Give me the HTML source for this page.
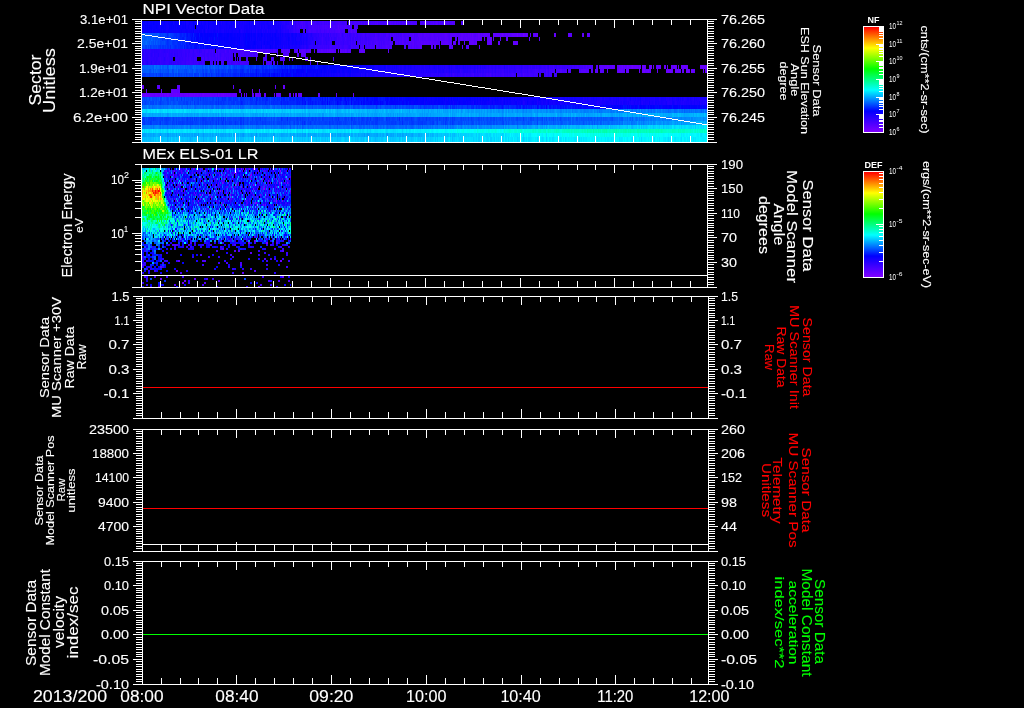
<!DOCTYPE html>
<html><head><meta charset="utf-8"><style>
html,body{margin:0;padding:0;background:#000;width:1024px;height:708px;overflow:hidden}
#c{position:absolute;left:0;top:0}
svg{position:absolute;left:0;top:0}
text{font-family:"Liberation Sans",sans-serif;stroke-width:0.12px}
</style></head><body>
<svg id="fb" width="1024" height="708" style="position:absolute;left:0;top:0"><defs><linearGradient id="fr0" gradientUnits="userSpaceOnUse" x1="142" y1="0" x2="707" y2="0"><stop offset="0.0000" stop-color="#0600ff"/><stop offset="0.2442" stop-color="#1900ff"/><stop offset="0.2814" stop-color="#4000ff"/><stop offset="0.5274" stop-color="#4800f2"/><stop offset="0.5646" stop-color="#0b0026"/><stop offset="0.5982" stop-color="#070019"/><stop offset="0.6336" stop-color="#000000"/></linearGradient><linearGradient id="fr1" gradientUnits="userSpaceOnUse" x1="142" y1="0" x2="707" y2="0"><stop offset="0.0000" stop-color="#0600ff"/><stop offset="0.2442" stop-color="#1900f9"/><stop offset="0.2814" stop-color="#4000ff"/><stop offset="0.3681" stop-color="#4800f2"/><stop offset="0.3858" stop-color="#020007"/><stop offset="0.5451" stop-color="#020007"/><stop offset="0.5805" stop-color="#000000"/></linearGradient><linearGradient id="fr2" gradientUnits="userSpaceOnUse" x1="142" y1="0" x2="707" y2="0"><stop offset="0.0000" stop-color="#0600ff"/><stop offset="0.2442" stop-color="#1800f2"/><stop offset="0.2814" stop-color="#3900e5"/><stop offset="0.3681" stop-color="#3d00cc"/><stop offset="0.3947" stop-color="#010005"/><stop offset="0.5451" stop-color="#000000"/></linearGradient><linearGradient id="fr3" gradientUnits="userSpaceOnUse" x1="142" y1="0" x2="707" y2="0"><stop offset="0.0000" stop-color="#0066ff"/><stop offset="0.1027" stop-color="#0000ff"/><stop offset="0.2796" stop-color="#1300ff"/><stop offset="0.3150" stop-color="#3300ff"/><stop offset="0.5628" stop-color="#5500f2"/><stop offset="0.6832" stop-color="#5600e5"/><stop offset="0.6938" stop-color="#1c004c"/><stop offset="0.7929" stop-color="#130032"/><stop offset="0.8106" stop-color="#000000"/></linearGradient><linearGradient id="fr4" gradientUnits="userSpaceOnUse" x1="142" y1="0" x2="707" y2="0"><stop offset="0.0000" stop-color="#0066ff"/><stop offset="0.1027" stop-color="#0000ff"/><stop offset="0.2796" stop-color="#1300ff"/><stop offset="0.3150" stop-color="#3300ff"/><stop offset="0.5628" stop-color="#4c00d8"/><stop offset="0.6248" stop-color="#390099"/><stop offset="0.6425" stop-color="#11002d"/><stop offset="0.7398" stop-color="#090019"/><stop offset="0.7752" stop-color="#000000"/></linearGradient><linearGradient id="fr5" gradientUnits="userSpaceOnUse" x1="142" y1="0" x2="707" y2="0"><stop offset="0.0000" stop-color="#0066ff"/><stop offset="0.1027" stop-color="#0000ff"/><stop offset="0.2796" stop-color="#1300ff"/><stop offset="0.3150" stop-color="#3000f2"/><stop offset="0.5274" stop-color="#4c00d8"/><stop offset="0.6159" stop-color="#30007f"/><stop offset="0.6336" stop-color="#070014"/><stop offset="0.7221" stop-color="#04000c"/><stop offset="0.7398" stop-color="#000000"/></linearGradient><linearGradient id="fr6" gradientUnits="userSpaceOnUse" x1="142" y1="0" x2="707" y2="0"><stop offset="0.0000" stop-color="#004cff"/><stop offset="0.1027" stop-color="#000cff"/><stop offset="0.2796" stop-color="#1900ff"/><stop offset="0.3150" stop-color="#3600f2"/><stop offset="0.4566" stop-color="#3d00cc"/><stop offset="0.5628" stop-color="#1a004c"/><stop offset="0.6159" stop-color="#04000c"/><stop offset="0.6336" stop-color="#000000"/></linearGradient><linearGradient id="fr7" gradientUnits="userSpaceOnUse" x1="142" y1="0" x2="707" y2="0"><stop offset="0.0000" stop-color="#2900ff"/><stop offset="0.1027" stop-color="#3900ff"/><stop offset="0.1912" stop-color="#4400f7"/><stop offset="0.2796" stop-color="#4600d8"/><stop offset="0.3504" stop-color="#4700cc"/><stop offset="0.3681" stop-color="#080019"/><stop offset="0.5628" stop-color="#04000c"/><stop offset="0.5805" stop-color="#000000"/></linearGradient><linearGradient id="fr8" gradientUnits="userSpaceOnUse" x1="142" y1="0" x2="707" y2="0"><stop offset="0.0000" stop-color="#2900ff"/><stop offset="0.1027" stop-color="#3900fc"/><stop offset="0.1912" stop-color="#3800cc"/><stop offset="0.2796" stop-color="#18004c"/><stop offset="0.2973" stop-color="#060014"/><stop offset="0.3504" stop-color="#010005"/><stop offset="0.3681" stop-color="#000000"/></linearGradient><linearGradient id="fr9" gradientUnits="userSpaceOnUse" x1="142" y1="0" x2="707" y2="0"><stop offset="0.0000" stop-color="#2900ff"/><stop offset="0.0850" stop-color="#3800f9"/><stop offset="0.1912" stop-color="#23007f"/><stop offset="0.2796" stop-color="#080019"/><stop offset="0.3504" stop-color="#010005"/><stop offset="0.3681" stop-color="#000000"/></linearGradient><linearGradient id="fr10" gradientUnits="userSpaceOnUse" x1="142" y1="0" x2="707" y2="0"><stop offset="0.0000" stop-color="#0066ff"/><stop offset="0.1027" stop-color="#0059ff"/><stop offset="0.2796" stop-color="#0019ff"/><stop offset="0.4566" stop-color="#1900ff"/><stop offset="0.5628" stop-color="#2000ff"/><stop offset="0.7752" stop-color="#3e00f7"/><stop offset="0.8106" stop-color="#4700cc"/><stop offset="0.8814" stop-color="#4c00bf"/><stop offset="0.9982" stop-color="#5100cc"/></linearGradient><linearGradient id="fr11" gradientUnits="userSpaceOnUse" x1="142" y1="0" x2="707" y2="0"><stop offset="0.0000" stop-color="#0059ff"/><stop offset="0.1027" stop-color="#004cff"/><stop offset="0.2796" stop-color="#0000ff"/><stop offset="0.4566" stop-color="#1900ff"/><stop offset="0.5628" stop-color="#2600ff"/><stop offset="0.7221" stop-color="#3c00f2"/><stop offset="0.7398" stop-color="#2e0099"/><stop offset="0.8478" stop-color="#30007f"/><stop offset="0.8814" stop-color="#280066"/><stop offset="0.9982" stop-color="#33007f"/></linearGradient><linearGradient id="fr12" gradientUnits="userSpaceOnUse" x1="142" y1="0" x2="707" y2="0"><stop offset="0.0000" stop-color="#003fff"/><stop offset="0.1027" stop-color="#003fff"/><stop offset="0.2796" stop-color="#0600ff"/><stop offset="0.4566" stop-color="#2000ff"/><stop offset="0.5628" stop-color="#3200f9"/><stop offset="0.7044" stop-color="#3900e5"/><stop offset="0.7363" stop-color="#2c00b2"/><stop offset="0.7434" stop-color="#000000"/><stop offset="0.9982" stop-color="#000000"/></linearGradient><linearGradient id="fr13" gradientUnits="userSpaceOnUse" x1="142" y1="0" x2="707" y2="0"><stop offset="0.0000" stop-color="#000000"/><stop offset="0.9982" stop-color="#000000"/></linearGradient><linearGradient id="fr14" gradientUnits="userSpaceOnUse" x1="142" y1="0" x2="707" y2="0"><stop offset="0.0000" stop-color="#060011"/><stop offset="0.0142" stop-color="#130032"/><stop offset="0.0584" stop-color="#130032"/><stop offset="0.0761" stop-color="#020007"/><stop offset="0.1469" stop-color="#020007"/><stop offset="0.1664" stop-color="#130032"/><stop offset="0.1912" stop-color="#0e0026"/><stop offset="0.2088" stop-color="#020007"/><stop offset="0.2796" stop-color="#010005"/><stop offset="0.3150" stop-color="#000000"/><stop offset="0.9982" stop-color="#000000"/></linearGradient><linearGradient id="fr15" gradientUnits="userSpaceOnUse" x1="142" y1="0" x2="707" y2="0"><stop offset="0.0000" stop-color="#6300f7"/><stop offset="0.1469" stop-color="#6100f2"/><stop offset="0.1593" stop-color="#3e00a5"/><stop offset="0.2796" stop-color="#34008c"/><stop offset="0.2973" stop-color="#0e0026"/><stop offset="0.4566" stop-color="#060011"/><stop offset="0.4743" stop-color="#000000"/><stop offset="0.9982" stop-color="#000000"/></linearGradient><linearGradient id="fr16" gradientUnits="userSpaceOnUse" x1="142" y1="0" x2="707" y2="0"><stop offset="0.0000" stop-color="#004cff"/><stop offset="0.1027" stop-color="#003fff"/><stop offset="0.4566" stop-color="#0000ff"/><stop offset="0.8106" stop-color="#1600ff"/><stop offset="0.9982" stop-color="#1900ff"/></linearGradient><linearGradient id="fr17" gradientUnits="userSpaceOnUse" x1="142" y1="0" x2="707" y2="0"><stop offset="0.0000" stop-color="#0072ff"/><stop offset="0.4566" stop-color="#004cff"/><stop offset="0.8106" stop-color="#0000ff"/><stop offset="0.9982" stop-color="#0000ff"/></linearGradient><linearGradient id="fr18" gradientUnits="userSpaceOnUse" x1="142" y1="0" x2="707" y2="0"><stop offset="0.0000" stop-color="#00dfff"/><stop offset="0.4566" stop-color="#00b2ff"/><stop offset="0.8106" stop-color="#007fff"/><stop offset="0.9982" stop-color="#0072ff"/></linearGradient><linearGradient id="fr19" gradientUnits="userSpaceOnUse" x1="142" y1="0" x2="707" y2="0"><stop offset="0.0000" stop-color="#00a5ff"/><stop offset="0.4566" stop-color="#00a5ff"/><stop offset="0.8106" stop-color="#00a5ff"/><stop offset="0.9982" stop-color="#00b2ff"/></linearGradient><linearGradient id="fr20" gradientUnits="userSpaceOnUse" x1="142" y1="0" x2="707" y2="0"><stop offset="0.0000" stop-color="#003fff"/><stop offset="0.4566" stop-color="#003fff"/><stop offset="0.8106" stop-color="#0059ff"/><stop offset="0.9982" stop-color="#0099ff"/></linearGradient><linearGradient id="fr21" gradientUnits="userSpaceOnUse" x1="142" y1="0" x2="707" y2="0"><stop offset="0.0000" stop-color="#003fff"/><stop offset="0.4566" stop-color="#003fff"/><stop offset="0.8106" stop-color="#0066ff"/><stop offset="0.9982" stop-color="#00b2ff"/></linearGradient><linearGradient id="fr22" gradientUnits="userSpaceOnUse" x1="142" y1="0" x2="707" y2="0"><stop offset="0.0000" stop-color="#007fff"/><stop offset="0.4566" stop-color="#0066ff"/><stop offset="0.8106" stop-color="#00bfff"/><stop offset="0.9982" stop-color="#00e5ff"/></linearGradient><linearGradient id="fr23" gradientUnits="userSpaceOnUse" x1="142" y1="0" x2="707" y2="0"><stop offset="0.0000" stop-color="#00dfff"/><stop offset="0.4566" stop-color="#00e5ff"/><stop offset="0.8106" stop-color="#00ffb2"/><stop offset="0.9982" stop-color="#00ffcc"/></linearGradient><linearGradient id="fr24" gradientUnits="userSpaceOnUse" x1="142" y1="0" x2="707" y2="0"><stop offset="0.0000" stop-color="#00a5ff"/><stop offset="0.4566" stop-color="#00acff"/><stop offset="0.8106" stop-color="#00ffe5"/><stop offset="0.9982" stop-color="#00f2ff"/></linearGradient><linearGradient id="fr25" gradientUnits="userSpaceOnUse" x1="142" y1="0" x2="707" y2="0"><stop offset="0.0000" stop-color="#00bfff"/><stop offset="0.4566" stop-color="#00cbff"/><stop offset="0.8106" stop-color="#00f2ff"/><stop offset="0.9982" stop-color="#00f2ff"/></linearGradient></defs><rect x="142" y="21" width="565" height="4" fill="url(#fr0)"/><rect x="142" y="25" width="565" height="4" fill="url(#fr1)"/><rect x="142" y="29" width="565" height="4" fill="url(#fr2)"/><rect x="142" y="33" width="565" height="4" fill="url(#fr3)"/><rect x="142" y="37" width="565" height="4" fill="url(#fr4)"/><rect x="142" y="41" width="565" height="4" fill="url(#fr5)"/><rect x="142" y="45" width="565" height="4" fill="url(#fr6)"/><rect x="142" y="49" width="565" height="4" fill="url(#fr7)"/><rect x="142" y="53" width="565" height="4" fill="url(#fr8)"/><rect x="142" y="57" width="565" height="8" fill="url(#fr9)"/><rect x="142" y="65" width="565" height="4" fill="url(#fr10)"/><rect x="142" y="69" width="565" height="4" fill="url(#fr11)"/><rect x="142" y="73" width="565" height="4" fill="url(#fr12)"/><rect x="142" y="77" width="565" height="8" fill="url(#fr13)"/><rect x="142" y="85" width="565" height="8" fill="url(#fr14)"/><rect x="142" y="93" width="565" height="4" fill="url(#fr15)"/><rect x="142" y="97" width="565" height="8" fill="url(#fr16)"/><rect x="142" y="105" width="565" height="4" fill="url(#fr17)"/><rect x="142" y="109" width="565" height="4" fill="url(#fr18)"/><rect x="142" y="113" width="565" height="4" fill="url(#fr19)"/><rect x="142" y="117" width="565" height="4" fill="url(#fr20)"/><rect x="142" y="121" width="565" height="4" fill="url(#fr21)"/><rect x="142" y="125" width="565" height="4" fill="url(#fr22)"/><rect x="142" y="129" width="565" height="4" fill="url(#fr23)"/><rect x="142" y="133" width="565" height="4" fill="url(#fr24)"/><rect x="142" y="137" width="565" height="5" fill="url(#fr25)"/><rect x="142" y="168" width="149" height="38" fill="#1818e0"/><rect x="142" y="206" width="149" height="36" fill="#10a0f0"/><rect x="142" y="242" width="149" height="45" fill="#080830"/><rect x="142" y="168" width="19" height="70" fill="#a0f000"/><rect x="142" y="184" width="19" height="18" fill="#ffa000"/><polyline points="141,34.50 149,35.70 157,36.90 165,38.11 173,39.31 181,40.52 189,41.73 197,42.94 205,44.16 213,45.38 221,46.60 229,47.82 237,49.05 245,50.27 253,51.50 261,52.73 269,53.97 277,55.20 285,56.44 293,57.68 301,58.92 309,60.17 317,61.42 325,62.67 333,63.92 341,65.17 349,66.43 357,67.69 365,68.95 373,70.21 381,71.48 389,72.75 397,74.02 405,75.29 413,76.56 421,77.84 429,79.12 437,80.40 445,81.69 453,82.97 461,84.26 469,85.55 477,86.85 485,88.14 493,89.44 501,90.74 509,92.04 517,93.35 525,94.65 533,95.96 541,97.27 549,98.59 557,99.90 565,101.22 573,102.54 581,103.86 589,105.19 597,106.52 605,107.85 613,109.18 621,110.51 629,111.85 637,113.19 645,114.53 653,115.87 661,117.22 669,118.57 677,119.92 685,121.27 693,122.62 701,123.98" fill="none" stroke="#fff" stroke-width="1"/></svg><canvas id="c" width="1024" height="708"></canvas>
<svg width="1024" height="708" viewBox="0 0 1024 708" shape-rendering="crispEdges"><defs></defs><linearGradient id="g0" x1="0" y1="1" x2="0" y2="0"><stop offset="0" stop-color="#8000ff"/><stop offset="0.2" stop-color="#0000ff"/><stop offset="0.4" stop-color="#00ffff"/><stop offset="0.6" stop-color="#00ff00"/><stop offset="0.8" stop-color="#ffff00"/><stop offset="0.9" stop-color="#ff8000"/><stop offset="1" stop-color="#ff0000"/></linearGradient><rect x="864" y="27" width="19" height="105" fill="url(#g0)"/><rect x="863" y="26" width="21" height="1" fill="#fff"/><rect x="863" y="132" width="21" height="1" fill="#fff"/><rect x="863" y="26" width="1" height="107" fill="#fff"/><rect x="883" y="26" width="1" height="107" fill="#fff"/><rect x="876" y="132" width="7" height="1" fill="#fff"/><rect x="879" y="127" width="4" height="1" fill="#fff"/><rect x="879" y="124" width="4" height="1" fill="#fff"/><rect x="879" y="121" width="4" height="1" fill="#fff"/><rect x="879" y="120" width="4" height="1" fill="#fff"/><rect x="879" y="118" width="4" height="1" fill="#fff"/><rect x="879" y="117" width="4" height="1" fill="#fff"/><rect x="879" y="116" width="4" height="1" fill="#fff"/><rect x="879" y="115" width="4" height="1" fill="#fff"/><rect x="876" y="114" width="7" height="1" fill="#fff"/><rect x="879" y="109" width="4" height="1" fill="#fff"/><rect x="879" y="106" width="4" height="1" fill="#fff"/><rect x="879" y="104" width="4" height="1" fill="#fff"/><rect x="879" y="102" width="4" height="1" fill="#fff"/><rect x="879" y="101" width="4" height="1" fill="#fff"/><rect x="879" y="99" width="4" height="1" fill="#fff"/><rect x="879" y="98" width="4" height="1" fill="#fff"/><rect x="879" y="97" width="4" height="1" fill="#fff"/><rect x="876" y="97" width="7" height="1" fill="#fff"/><rect x="879" y="91" width="4" height="1" fill="#fff"/><rect x="879" y="88" width="4" height="1" fill="#fff"/><rect x="879" y="86" width="4" height="1" fill="#fff"/><rect x="879" y="84" width="4" height="1" fill="#fff"/><rect x="879" y="83" width="4" height="1" fill="#fff"/><rect x="879" y="82" width="4" height="1" fill="#fff"/><rect x="879" y="81" width="4" height="1" fill="#fff"/><rect x="879" y="80" width="4" height="1" fill="#fff"/><rect x="876" y="79" width="7" height="1" fill="#fff"/><rect x="879" y="74" width="4" height="1" fill="#fff"/><rect x="879" y="71" width="4" height="1" fill="#fff"/><rect x="879" y="68" width="4" height="1" fill="#fff"/><rect x="879" y="67" width="4" height="1" fill="#fff"/><rect x="879" y="65" width="4" height="1" fill="#fff"/><rect x="879" y="64" width="4" height="1" fill="#fff"/><rect x="879" y="63" width="4" height="1" fill="#fff"/><rect x="879" y="62" width="4" height="1" fill="#fff"/><rect x="876" y="61" width="7" height="1" fill="#fff"/><rect x="879" y="56" width="4" height="1" fill="#fff"/><rect x="879" y="53" width="4" height="1" fill="#fff"/><rect x="879" y="51" width="4" height="1" fill="#fff"/><rect x="879" y="49" width="4" height="1" fill="#fff"/><rect x="879" y="48" width="4" height="1" fill="#fff"/><rect x="879" y="46" width="4" height="1" fill="#fff"/><rect x="879" y="45" width="4" height="1" fill="#fff"/><rect x="879" y="44" width="4" height="1" fill="#fff"/><rect x="876" y="44" width="7" height="1" fill="#fff"/><rect x="879" y="38" width="4" height="1" fill="#fff"/><rect x="879" y="35" width="4" height="1" fill="#fff"/><rect x="879" y="33" width="4" height="1" fill="#fff"/><rect x="879" y="31" width="4" height="1" fill="#fff"/><rect x="879" y="30" width="4" height="1" fill="#fff"/><rect x="879" y="29" width="4" height="1" fill="#fff"/><rect x="879" y="28" width="4" height="1" fill="#fff"/><rect x="879" y="27" width="4" height="1" fill="#fff"/><rect x="876" y="26" width="7" height="1" fill="#fff"/><linearGradient id="g1" x1="0" y1="1" x2="0" y2="0"><stop offset="0" stop-color="#8000ff"/><stop offset="0.2" stop-color="#0000ff"/><stop offset="0.4" stop-color="#00ffff"/><stop offset="0.6" stop-color="#00ff00"/><stop offset="0.8" stop-color="#ffff00"/><stop offset="0.9" stop-color="#ff8000"/><stop offset="1" stop-color="#ff0000"/></linearGradient><rect x="864" y="172" width="19" height="105" fill="url(#g1)"/><rect x="863" y="171" width="21" height="1" fill="#fff"/><rect x="863" y="277" width="21" height="1" fill="#fff"/><rect x="863" y="171" width="1" height="107" fill="#fff"/><rect x="883" y="171" width="1" height="107" fill="#fff"/><rect x="876" y="277" width="7" height="1" fill="#fff"/><rect x="879" y="261" width="4" height="1" fill="#fff"/><rect x="879" y="252" width="4" height="1" fill="#fff"/><rect x="879" y="245" width="4" height="1" fill="#fff"/><rect x="879" y="240" width="4" height="1" fill="#fff"/><rect x="879" y="236" width="4" height="1" fill="#fff"/><rect x="879" y="232" width="4" height="1" fill="#fff"/><rect x="879" y="229" width="4" height="1" fill="#fff"/><rect x="879" y="226" width="4" height="1" fill="#fff"/><rect x="876" y="224" width="7" height="1" fill="#fff"/><rect x="879" y="208" width="4" height="1" fill="#fff"/><rect x="879" y="199" width="4" height="1" fill="#fff"/><rect x="879" y="192" width="4" height="1" fill="#fff"/><rect x="879" y="187" width="4" height="1" fill="#fff"/><rect x="879" y="183" width="4" height="1" fill="#fff"/><rect x="879" y="179" width="4" height="1" fill="#fff"/><rect x="879" y="176" width="4" height="1" fill="#fff"/><rect x="879" y="173" width="4" height="1" fill="#fff"/><rect x="876" y="171" width="7" height="1" fill="#fff"/><rect x="141" y="19" width="567" height="1" fill="#fff"/><rect x="141" y="142" width="567" height="1" fill="#fff"/><rect x="141" y="19" width="1" height="124" fill="#fff"/><rect x="707" y="19" width="1" height="124" fill="#fff"/><rect x="141" y="19" width="1" height="9" fill="#fff"/><rect x="141" y="133" width="1" height="9" fill="#fff"/><rect x="160" y="19" width="1" height="6" fill="#fff"/><rect x="160" y="136" width="1" height="6" fill="#fff"/><rect x="179" y="19" width="1" height="6" fill="#fff"/><rect x="179" y="136" width="1" height="6" fill="#fff"/><rect x="197" y="19" width="1" height="6" fill="#fff"/><rect x="197" y="136" width="1" height="6" fill="#fff"/><rect x="216" y="19" width="1" height="6" fill="#fff"/><rect x="216" y="136" width="1" height="6" fill="#fff"/><rect x="235" y="19" width="1" height="9" fill="#fff"/><rect x="235" y="133" width="1" height="9" fill="#fff"/><rect x="254" y="19" width="1" height="6" fill="#fff"/><rect x="254" y="136" width="1" height="6" fill="#fff"/><rect x="273" y="19" width="1" height="6" fill="#fff"/><rect x="273" y="136" width="1" height="6" fill="#fff"/><rect x="292" y="19" width="1" height="6" fill="#fff"/><rect x="292" y="136" width="1" height="6" fill="#fff"/><rect x="311" y="19" width="1" height="6" fill="#fff"/><rect x="311" y="136" width="1" height="6" fill="#fff"/><rect x="330" y="19" width="1" height="9" fill="#fff"/><rect x="330" y="133" width="1" height="9" fill="#fff"/><rect x="349" y="19" width="1" height="6" fill="#fff"/><rect x="349" y="136" width="1" height="6" fill="#fff"/><rect x="368" y="19" width="1" height="6" fill="#fff"/><rect x="368" y="136" width="1" height="6" fill="#fff"/><rect x="387" y="19" width="1" height="6" fill="#fff"/><rect x="387" y="136" width="1" height="6" fill="#fff"/><rect x="406" y="19" width="1" height="6" fill="#fff"/><rect x="406" y="136" width="1" height="6" fill="#fff"/><rect x="425" y="19" width="1" height="9" fill="#fff"/><rect x="425" y="133" width="1" height="9" fill="#fff"/><rect x="444" y="19" width="1" height="6" fill="#fff"/><rect x="444" y="136" width="1" height="6" fill="#fff"/><rect x="463" y="19" width="1" height="6" fill="#fff"/><rect x="463" y="136" width="1" height="6" fill="#fff"/><rect x="482" y="19" width="1" height="6" fill="#fff"/><rect x="482" y="136" width="1" height="6" fill="#fff"/><rect x="501" y="19" width="1" height="6" fill="#fff"/><rect x="501" y="136" width="1" height="6" fill="#fff"/><rect x="520" y="19" width="1" height="9" fill="#fff"/><rect x="520" y="133" width="1" height="9" fill="#fff"/><rect x="539" y="19" width="1" height="6" fill="#fff"/><rect x="539" y="136" width="1" height="6" fill="#fff"/><rect x="558" y="19" width="1" height="6" fill="#fff"/><rect x="558" y="136" width="1" height="6" fill="#fff"/><rect x="577" y="19" width="1" height="6" fill="#fff"/><rect x="577" y="136" width="1" height="6" fill="#fff"/><rect x="595" y="19" width="1" height="6" fill="#fff"/><rect x="595" y="136" width="1" height="6" fill="#fff"/><rect x="614" y="19" width="1" height="9" fill="#fff"/><rect x="614" y="133" width="1" height="9" fill="#fff"/><rect x="633" y="19" width="1" height="6" fill="#fff"/><rect x="633" y="136" width="1" height="6" fill="#fff"/><rect x="652" y="19" width="1" height="6" fill="#fff"/><rect x="652" y="136" width="1" height="6" fill="#fff"/><rect x="671" y="19" width="1" height="6" fill="#fff"/><rect x="671" y="136" width="1" height="6" fill="#fff"/><rect x="690" y="19" width="1" height="6" fill="#fff"/><rect x="690" y="136" width="1" height="6" fill="#fff"/><rect x="141" y="164" width="567" height="1" fill="#fff"/><rect x="141" y="287" width="567" height="1" fill="#fff"/><rect x="141" y="164" width="1" height="124" fill="#fff"/><rect x="707" y="164" width="1" height="124" fill="#fff"/><rect x="141" y="164" width="1" height="9" fill="#fff"/><rect x="141" y="278" width="1" height="9" fill="#fff"/><rect x="160" y="164" width="1" height="6" fill="#fff"/><rect x="160" y="281" width="1" height="6" fill="#fff"/><rect x="179" y="164" width="1" height="6" fill="#fff"/><rect x="179" y="281" width="1" height="6" fill="#fff"/><rect x="197" y="164" width="1" height="6" fill="#fff"/><rect x="197" y="281" width="1" height="6" fill="#fff"/><rect x="216" y="164" width="1" height="6" fill="#fff"/><rect x="216" y="281" width="1" height="6" fill="#fff"/><rect x="235" y="164" width="1" height="9" fill="#fff"/><rect x="235" y="278" width="1" height="9" fill="#fff"/><rect x="254" y="164" width="1" height="6" fill="#fff"/><rect x="254" y="281" width="1" height="6" fill="#fff"/><rect x="273" y="164" width="1" height="6" fill="#fff"/><rect x="273" y="281" width="1" height="6" fill="#fff"/><rect x="292" y="164" width="1" height="6" fill="#fff"/><rect x="292" y="281" width="1" height="6" fill="#fff"/><rect x="311" y="164" width="1" height="6" fill="#fff"/><rect x="311" y="281" width="1" height="6" fill="#fff"/><rect x="330" y="164" width="1" height="9" fill="#fff"/><rect x="330" y="278" width="1" height="9" fill="#fff"/><rect x="349" y="164" width="1" height="6" fill="#fff"/><rect x="349" y="281" width="1" height="6" fill="#fff"/><rect x="368" y="164" width="1" height="6" fill="#fff"/><rect x="368" y="281" width="1" height="6" fill="#fff"/><rect x="387" y="164" width="1" height="6" fill="#fff"/><rect x="387" y="281" width="1" height="6" fill="#fff"/><rect x="406" y="164" width="1" height="6" fill="#fff"/><rect x="406" y="281" width="1" height="6" fill="#fff"/><rect x="425" y="164" width="1" height="9" fill="#fff"/><rect x="425" y="278" width="1" height="9" fill="#fff"/><rect x="444" y="164" width="1" height="6" fill="#fff"/><rect x="444" y="281" width="1" height="6" fill="#fff"/><rect x="463" y="164" width="1" height="6" fill="#fff"/><rect x="463" y="281" width="1" height="6" fill="#fff"/><rect x="482" y="164" width="1" height="6" fill="#fff"/><rect x="482" y="281" width="1" height="6" fill="#fff"/><rect x="501" y="164" width="1" height="6" fill="#fff"/><rect x="501" y="281" width="1" height="6" fill="#fff"/><rect x="520" y="164" width="1" height="9" fill="#fff"/><rect x="520" y="278" width="1" height="9" fill="#fff"/><rect x="539" y="164" width="1" height="6" fill="#fff"/><rect x="539" y="281" width="1" height="6" fill="#fff"/><rect x="558" y="164" width="1" height="6" fill="#fff"/><rect x="558" y="281" width="1" height="6" fill="#fff"/><rect x="577" y="164" width="1" height="6" fill="#fff"/><rect x="577" y="281" width="1" height="6" fill="#fff"/><rect x="595" y="164" width="1" height="6" fill="#fff"/><rect x="595" y="281" width="1" height="6" fill="#fff"/><rect x="614" y="164" width="1" height="9" fill="#fff"/><rect x="614" y="278" width="1" height="9" fill="#fff"/><rect x="633" y="164" width="1" height="6" fill="#fff"/><rect x="633" y="281" width="1" height="6" fill="#fff"/><rect x="652" y="164" width="1" height="6" fill="#fff"/><rect x="652" y="281" width="1" height="6" fill="#fff"/><rect x="671" y="164" width="1" height="6" fill="#fff"/><rect x="671" y="281" width="1" height="6" fill="#fff"/><rect x="690" y="164" width="1" height="6" fill="#fff"/><rect x="690" y="281" width="1" height="6" fill="#fff"/><rect x="142" y="296" width="567" height="1" fill="#fff"/><rect x="142" y="418" width="567" height="1" fill="#fff"/><rect x="142" y="296" width="1" height="123" fill="#fff"/><rect x="708" y="296" width="1" height="123" fill="#fff"/><rect x="142" y="296" width="1" height="9" fill="#fff"/><rect x="142" y="409" width="1" height="9" fill="#fff"/><rect x="161" y="296" width="1" height="6" fill="#fff"/><rect x="161" y="412" width="1" height="6" fill="#fff"/><rect x="180" y="296" width="1" height="6" fill="#fff"/><rect x="180" y="412" width="1" height="6" fill="#fff"/><rect x="198" y="296" width="1" height="6" fill="#fff"/><rect x="198" y="412" width="1" height="6" fill="#fff"/><rect x="217" y="296" width="1" height="6" fill="#fff"/><rect x="217" y="412" width="1" height="6" fill="#fff"/><rect x="236" y="296" width="1" height="9" fill="#fff"/><rect x="236" y="409" width="1" height="9" fill="#fff"/><rect x="255" y="296" width="1" height="6" fill="#fff"/><rect x="255" y="412" width="1" height="6" fill="#fff"/><rect x="274" y="296" width="1" height="6" fill="#fff"/><rect x="274" y="412" width="1" height="6" fill="#fff"/><rect x="293" y="296" width="1" height="6" fill="#fff"/><rect x="293" y="412" width="1" height="6" fill="#fff"/><rect x="312" y="296" width="1" height="6" fill="#fff"/><rect x="312" y="412" width="1" height="6" fill="#fff"/><rect x="331" y="296" width="1" height="9" fill="#fff"/><rect x="331" y="409" width="1" height="9" fill="#fff"/><rect x="350" y="296" width="1" height="6" fill="#fff"/><rect x="350" y="412" width="1" height="6" fill="#fff"/><rect x="369" y="296" width="1" height="6" fill="#fff"/><rect x="369" y="412" width="1" height="6" fill="#fff"/><rect x="388" y="296" width="1" height="6" fill="#fff"/><rect x="388" y="412" width="1" height="6" fill="#fff"/><rect x="407" y="296" width="1" height="6" fill="#fff"/><rect x="407" y="412" width="1" height="6" fill="#fff"/><rect x="426" y="296" width="1" height="9" fill="#fff"/><rect x="426" y="409" width="1" height="9" fill="#fff"/><rect x="445" y="296" width="1" height="6" fill="#fff"/><rect x="445" y="412" width="1" height="6" fill="#fff"/><rect x="464" y="296" width="1" height="6" fill="#fff"/><rect x="464" y="412" width="1" height="6" fill="#fff"/><rect x="483" y="296" width="1" height="6" fill="#fff"/><rect x="483" y="412" width="1" height="6" fill="#fff"/><rect x="502" y="296" width="1" height="6" fill="#fff"/><rect x="502" y="412" width="1" height="6" fill="#fff"/><rect x="521" y="296" width="1" height="9" fill="#fff"/><rect x="521" y="409" width="1" height="9" fill="#fff"/><rect x="540" y="296" width="1" height="6" fill="#fff"/><rect x="540" y="412" width="1" height="6" fill="#fff"/><rect x="559" y="296" width="1" height="6" fill="#fff"/><rect x="559" y="412" width="1" height="6" fill="#fff"/><rect x="578" y="296" width="1" height="6" fill="#fff"/><rect x="578" y="412" width="1" height="6" fill="#fff"/><rect x="596" y="296" width="1" height="6" fill="#fff"/><rect x="596" y="412" width="1" height="6" fill="#fff"/><rect x="615" y="296" width="1" height="9" fill="#fff"/><rect x="615" y="409" width="1" height="9" fill="#fff"/><rect x="634" y="296" width="1" height="6" fill="#fff"/><rect x="634" y="412" width="1" height="6" fill="#fff"/><rect x="653" y="296" width="1" height="6" fill="#fff"/><rect x="653" y="412" width="1" height="6" fill="#fff"/><rect x="672" y="296" width="1" height="6" fill="#fff"/><rect x="672" y="412" width="1" height="6" fill="#fff"/><rect x="691" y="296" width="1" height="6" fill="#fff"/><rect x="691" y="412" width="1" height="6" fill="#fff"/><rect x="142" y="429" width="567" height="1" fill="#fff"/><rect x="142" y="551" width="567" height="1" fill="#fff"/><rect x="142" y="429" width="1" height="123" fill="#fff"/><rect x="708" y="429" width="1" height="123" fill="#fff"/><rect x="142" y="429" width="1" height="9" fill="#fff"/><rect x="142" y="542" width="1" height="9" fill="#fff"/><rect x="161" y="429" width="1" height="6" fill="#fff"/><rect x="161" y="545" width="1" height="6" fill="#fff"/><rect x="180" y="429" width="1" height="6" fill="#fff"/><rect x="180" y="545" width="1" height="6" fill="#fff"/><rect x="198" y="429" width="1" height="6" fill="#fff"/><rect x="198" y="545" width="1" height="6" fill="#fff"/><rect x="217" y="429" width="1" height="6" fill="#fff"/><rect x="217" y="545" width="1" height="6" fill="#fff"/><rect x="236" y="429" width="1" height="9" fill="#fff"/><rect x="236" y="542" width="1" height="9" fill="#fff"/><rect x="255" y="429" width="1" height="6" fill="#fff"/><rect x="255" y="545" width="1" height="6" fill="#fff"/><rect x="274" y="429" width="1" height="6" fill="#fff"/><rect x="274" y="545" width="1" height="6" fill="#fff"/><rect x="293" y="429" width="1" height="6" fill="#fff"/><rect x="293" y="545" width="1" height="6" fill="#fff"/><rect x="312" y="429" width="1" height="6" fill="#fff"/><rect x="312" y="545" width="1" height="6" fill="#fff"/><rect x="331" y="429" width="1" height="9" fill="#fff"/><rect x="331" y="542" width="1" height="9" fill="#fff"/><rect x="350" y="429" width="1" height="6" fill="#fff"/><rect x="350" y="545" width="1" height="6" fill="#fff"/><rect x="369" y="429" width="1" height="6" fill="#fff"/><rect x="369" y="545" width="1" height="6" fill="#fff"/><rect x="388" y="429" width="1" height="6" fill="#fff"/><rect x="388" y="545" width="1" height="6" fill="#fff"/><rect x="407" y="429" width="1" height="6" fill="#fff"/><rect x="407" y="545" width="1" height="6" fill="#fff"/><rect x="426" y="429" width="1" height="9" fill="#fff"/><rect x="426" y="542" width="1" height="9" fill="#fff"/><rect x="445" y="429" width="1" height="6" fill="#fff"/><rect x="445" y="545" width="1" height="6" fill="#fff"/><rect x="464" y="429" width="1" height="6" fill="#fff"/><rect x="464" y="545" width="1" height="6" fill="#fff"/><rect x="483" y="429" width="1" height="6" fill="#fff"/><rect x="483" y="545" width="1" height="6" fill="#fff"/><rect x="502" y="429" width="1" height="6" fill="#fff"/><rect x="502" y="545" width="1" height="6" fill="#fff"/><rect x="521" y="429" width="1" height="9" fill="#fff"/><rect x="521" y="542" width="1" height="9" fill="#fff"/><rect x="540" y="429" width="1" height="6" fill="#fff"/><rect x="540" y="545" width="1" height="6" fill="#fff"/><rect x="559" y="429" width="1" height="6" fill="#fff"/><rect x="559" y="545" width="1" height="6" fill="#fff"/><rect x="578" y="429" width="1" height="6" fill="#fff"/><rect x="578" y="545" width="1" height="6" fill="#fff"/><rect x="596" y="429" width="1" height="6" fill="#fff"/><rect x="596" y="545" width="1" height="6" fill="#fff"/><rect x="615" y="429" width="1" height="9" fill="#fff"/><rect x="615" y="542" width="1" height="9" fill="#fff"/><rect x="634" y="429" width="1" height="6" fill="#fff"/><rect x="634" y="545" width="1" height="6" fill="#fff"/><rect x="653" y="429" width="1" height="6" fill="#fff"/><rect x="653" y="545" width="1" height="6" fill="#fff"/><rect x="672" y="429" width="1" height="6" fill="#fff"/><rect x="672" y="545" width="1" height="6" fill="#fff"/><rect x="691" y="429" width="1" height="6" fill="#fff"/><rect x="691" y="545" width="1" height="6" fill="#fff"/><rect x="142" y="561" width="567" height="1" fill="#fff"/><rect x="142" y="684" width="567" height="1" fill="#fff"/><rect x="142" y="561" width="1" height="124" fill="#fff"/><rect x="708" y="561" width="1" height="124" fill="#fff"/><rect x="142" y="561" width="1" height="9" fill="#fff"/><rect x="142" y="675" width="1" height="9" fill="#fff"/><rect x="161" y="561" width="1" height="6" fill="#fff"/><rect x="161" y="678" width="1" height="6" fill="#fff"/><rect x="180" y="561" width="1" height="6" fill="#fff"/><rect x="180" y="678" width="1" height="6" fill="#fff"/><rect x="198" y="561" width="1" height="6" fill="#fff"/><rect x="198" y="678" width="1" height="6" fill="#fff"/><rect x="217" y="561" width="1" height="6" fill="#fff"/><rect x="217" y="678" width="1" height="6" fill="#fff"/><rect x="236" y="561" width="1" height="9" fill="#fff"/><rect x="236" y="675" width="1" height="9" fill="#fff"/><rect x="255" y="561" width="1" height="6" fill="#fff"/><rect x="255" y="678" width="1" height="6" fill="#fff"/><rect x="274" y="561" width="1" height="6" fill="#fff"/><rect x="274" y="678" width="1" height="6" fill="#fff"/><rect x="293" y="561" width="1" height="6" fill="#fff"/><rect x="293" y="678" width="1" height="6" fill="#fff"/><rect x="312" y="561" width="1" height="6" fill="#fff"/><rect x="312" y="678" width="1" height="6" fill="#fff"/><rect x="331" y="561" width="1" height="9" fill="#fff"/><rect x="331" y="675" width="1" height="9" fill="#fff"/><rect x="350" y="561" width="1" height="6" fill="#fff"/><rect x="350" y="678" width="1" height="6" fill="#fff"/><rect x="369" y="561" width="1" height="6" fill="#fff"/><rect x="369" y="678" width="1" height="6" fill="#fff"/><rect x="388" y="561" width="1" height="6" fill="#fff"/><rect x="388" y="678" width="1" height="6" fill="#fff"/><rect x="407" y="561" width="1" height="6" fill="#fff"/><rect x="407" y="678" width="1" height="6" fill="#fff"/><rect x="426" y="561" width="1" height="9" fill="#fff"/><rect x="426" y="675" width="1" height="9" fill="#fff"/><rect x="445" y="561" width="1" height="6" fill="#fff"/><rect x="445" y="678" width="1" height="6" fill="#fff"/><rect x="464" y="561" width="1" height="6" fill="#fff"/><rect x="464" y="678" width="1" height="6" fill="#fff"/><rect x="483" y="561" width="1" height="6" fill="#fff"/><rect x="483" y="678" width="1" height="6" fill="#fff"/><rect x="502" y="561" width="1" height="6" fill="#fff"/><rect x="502" y="678" width="1" height="6" fill="#fff"/><rect x="521" y="561" width="1" height="9" fill="#fff"/><rect x="521" y="675" width="1" height="9" fill="#fff"/><rect x="540" y="561" width="1" height="6" fill="#fff"/><rect x="540" y="678" width="1" height="6" fill="#fff"/><rect x="559" y="561" width="1" height="6" fill="#fff"/><rect x="559" y="678" width="1" height="6" fill="#fff"/><rect x="578" y="561" width="1" height="6" fill="#fff"/><rect x="578" y="678" width="1" height="6" fill="#fff"/><rect x="596" y="561" width="1" height="6" fill="#fff"/><rect x="596" y="678" width="1" height="6" fill="#fff"/><rect x="615" y="561" width="1" height="9" fill="#fff"/><rect x="615" y="675" width="1" height="9" fill="#fff"/><rect x="634" y="561" width="1" height="6" fill="#fff"/><rect x="634" y="678" width="1" height="6" fill="#fff"/><rect x="653" y="561" width="1" height="6" fill="#fff"/><rect x="653" y="678" width="1" height="6" fill="#fff"/><rect x="672" y="561" width="1" height="6" fill="#fff"/><rect x="672" y="678" width="1" height="6" fill="#fff"/><rect x="691" y="561" width="1" height="6" fill="#fff"/><rect x="691" y="678" width="1" height="6" fill="#fff"/><rect x="132" y="19" width="9" height="1" fill="#fff"/><rect x="708" y="19" width="9" height="1" fill="#fff"/><rect x="135" y="21" width="6" height="1" fill="#fff"/><rect x="708" y="21" width="6" height="1" fill="#fff"/><rect x="135" y="23" width="6" height="1" fill="#fff"/><rect x="708" y="23" width="6" height="1" fill="#fff"/><rect x="135" y="26" width="6" height="1" fill="#fff"/><rect x="708" y="26" width="6" height="1" fill="#fff"/><rect x="135" y="28" width="6" height="1" fill="#fff"/><rect x="708" y="28" width="6" height="1" fill="#fff"/><rect x="135" y="31" width="6" height="1" fill="#fff"/><rect x="708" y="31" width="6" height="1" fill="#fff"/><rect x="135" y="33" width="6" height="1" fill="#fff"/><rect x="708" y="33" width="6" height="1" fill="#fff"/><rect x="135" y="36" width="6" height="1" fill="#fff"/><rect x="708" y="36" width="6" height="1" fill="#fff"/><rect x="135" y="38" width="6" height="1" fill="#fff"/><rect x="708" y="38" width="6" height="1" fill="#fff"/><rect x="135" y="41" width="6" height="1" fill="#fff"/><rect x="708" y="41" width="6" height="1" fill="#fff"/><rect x="132" y="43" width="9" height="1" fill="#fff"/><rect x="708" y="43" width="9" height="1" fill="#fff"/><rect x="135" y="46" width="6" height="1" fill="#fff"/><rect x="708" y="46" width="6" height="1" fill="#fff"/><rect x="135" y="48" width="6" height="1" fill="#fff"/><rect x="708" y="48" width="6" height="1" fill="#fff"/><rect x="135" y="50" width="6" height="1" fill="#fff"/><rect x="708" y="50" width="6" height="1" fill="#fff"/><rect x="135" y="53" width="6" height="1" fill="#fff"/><rect x="708" y="53" width="6" height="1" fill="#fff"/><rect x="135" y="55" width="6" height="1" fill="#fff"/><rect x="708" y="55" width="6" height="1" fill="#fff"/><rect x="135" y="58" width="6" height="1" fill="#fff"/><rect x="708" y="58" width="6" height="1" fill="#fff"/><rect x="135" y="60" width="6" height="1" fill="#fff"/><rect x="708" y="60" width="6" height="1" fill="#fff"/><rect x="135" y="63" width="6" height="1" fill="#fff"/><rect x="708" y="63" width="6" height="1" fill="#fff"/><rect x="135" y="65" width="6" height="1" fill="#fff"/><rect x="708" y="65" width="6" height="1" fill="#fff"/><rect x="132" y="68" width="9" height="1" fill="#fff"/><rect x="708" y="68" width="9" height="1" fill="#fff"/><rect x="135" y="70" width="6" height="1" fill="#fff"/><rect x="708" y="70" width="6" height="1" fill="#fff"/><rect x="135" y="73" width="6" height="1" fill="#fff"/><rect x="708" y="73" width="6" height="1" fill="#fff"/><rect x="135" y="75" width="6" height="1" fill="#fff"/><rect x="708" y="75" width="6" height="1" fill="#fff"/><rect x="135" y="78" width="6" height="1" fill="#fff"/><rect x="708" y="78" width="6" height="1" fill="#fff"/><rect x="135" y="80" width="6" height="1" fill="#fff"/><rect x="708" y="80" width="6" height="1" fill="#fff"/><rect x="135" y="82" width="6" height="1" fill="#fff"/><rect x="708" y="82" width="6" height="1" fill="#fff"/><rect x="135" y="85" width="6" height="1" fill="#fff"/><rect x="708" y="85" width="6" height="1" fill="#fff"/><rect x="135" y="87" width="6" height="1" fill="#fff"/><rect x="708" y="87" width="6" height="1" fill="#fff"/><rect x="135" y="90" width="6" height="1" fill="#fff"/><rect x="708" y="90" width="6" height="1" fill="#fff"/><rect x="132" y="92" width="9" height="1" fill="#fff"/><rect x="708" y="92" width="9" height="1" fill="#fff"/><rect x="135" y="95" width="6" height="1" fill="#fff"/><rect x="708" y="95" width="6" height="1" fill="#fff"/><rect x="135" y="97" width="6" height="1" fill="#fff"/><rect x="708" y="97" width="6" height="1" fill="#fff"/><rect x="135" y="100" width="6" height="1" fill="#fff"/><rect x="708" y="100" width="6" height="1" fill="#fff"/><rect x="135" y="102" width="6" height="1" fill="#fff"/><rect x="708" y="102" width="6" height="1" fill="#fff"/><rect x="135" y="105" width="6" height="1" fill="#fff"/><rect x="708" y="105" width="6" height="1" fill="#fff"/><rect x="135" y="107" width="6" height="1" fill="#fff"/><rect x="708" y="107" width="6" height="1" fill="#fff"/><rect x="135" y="110" width="6" height="1" fill="#fff"/><rect x="708" y="110" width="6" height="1" fill="#fff"/><rect x="135" y="112" width="6" height="1" fill="#fff"/><rect x="708" y="112" width="6" height="1" fill="#fff"/><rect x="135" y="114" width="6" height="1" fill="#fff"/><rect x="708" y="114" width="6" height="1" fill="#fff"/><rect x="132" y="117" width="9" height="1" fill="#fff"/><rect x="708" y="117" width="9" height="1" fill="#fff"/><rect x="135" y="119" width="6" height="1" fill="#fff"/><rect x="708" y="119" width="6" height="1" fill="#fff"/><rect x="135" y="122" width="6" height="1" fill="#fff"/><rect x="708" y="122" width="6" height="1" fill="#fff"/><rect x="135" y="124" width="6" height="1" fill="#fff"/><rect x="708" y="124" width="6" height="1" fill="#fff"/><rect x="135" y="127" width="6" height="1" fill="#fff"/><rect x="708" y="127" width="6" height="1" fill="#fff"/><rect x="135" y="129" width="6" height="1" fill="#fff"/><rect x="708" y="129" width="6" height="1" fill="#fff"/><rect x="135" y="132" width="6" height="1" fill="#fff"/><rect x="708" y="132" width="6" height="1" fill="#fff"/><rect x="135" y="134" width="6" height="1" fill="#fff"/><rect x="708" y="134" width="6" height="1" fill="#fff"/><rect x="135" y="137" width="6" height="1" fill="#fff"/><rect x="708" y="137" width="6" height="1" fill="#fff"/><rect x="135" y="139" width="6" height="1" fill="#fff"/><rect x="708" y="139" width="6" height="1" fill="#fff"/><rect x="132" y="142" width="9" height="1" fill="#fff"/><rect x="708" y="142" width="9" height="1" fill="#fff"/><rect x="132" y="287" width="9" height="1" fill="#fff"/><rect x="135" y="270" width="6" height="1" fill="#fff"/><rect x="135" y="261" width="6" height="1" fill="#fff"/><rect x="135" y="254" width="6" height="1" fill="#fff"/><rect x="135" y="249" width="6" height="1" fill="#fff"/><rect x="135" y="245" width="6" height="1" fill="#fff"/><rect x="135" y="241" width="6" height="1" fill="#fff"/><rect x="135" y="238" width="6" height="1" fill="#fff"/><rect x="135" y="235" width="6" height="1" fill="#fff"/><rect x="132" y="233" width="9" height="1" fill="#fff"/><rect x="135" y="217" width="6" height="1" fill="#fff"/><rect x="135" y="208" width="6" height="1" fill="#fff"/><rect x="135" y="201" width="6" height="1" fill="#fff"/><rect x="135" y="196" width="6" height="1" fill="#fff"/><rect x="135" y="191" width="6" height="1" fill="#fff"/><rect x="135" y="188" width="6" height="1" fill="#fff"/><rect x="135" y="185" width="6" height="1" fill="#fff"/><rect x="135" y="182" width="6" height="1" fill="#fff"/><rect x="132" y="180" width="9" height="1" fill="#fff"/><rect x="135" y="164" width="6" height="1" fill="#fff"/><rect x="708" y="164" width="9" height="1" fill="#fff"/><rect x="708" y="166" width="6" height="1" fill="#fff"/><rect x="708" y="168" width="6" height="1" fill="#fff"/><rect x="708" y="171" width="6" height="1" fill="#fff"/><rect x="708" y="173" width="6" height="1" fill="#fff"/><rect x="708" y="176" width="6" height="1" fill="#fff"/><rect x="708" y="178" width="6" height="1" fill="#fff"/><rect x="708" y="181" width="6" height="1" fill="#fff"/><rect x="708" y="183" width="6" height="1" fill="#fff"/><rect x="708" y="186" width="6" height="1" fill="#fff"/><rect x="708" y="188" width="9" height="1" fill="#fff"/><rect x="708" y="191" width="6" height="1" fill="#fff"/><rect x="708" y="193" width="6" height="1" fill="#fff"/><rect x="708" y="195" width="6" height="1" fill="#fff"/><rect x="708" y="198" width="6" height="1" fill="#fff"/><rect x="708" y="200" width="6" height="1" fill="#fff"/><rect x="708" y="203" width="6" height="1" fill="#fff"/><rect x="708" y="205" width="6" height="1" fill="#fff"/><rect x="708" y="208" width="6" height="1" fill="#fff"/><rect x="708" y="210" width="6" height="1" fill="#fff"/><rect x="708" y="213" width="9" height="1" fill="#fff"/><rect x="708" y="215" width="6" height="1" fill="#fff"/><rect x="708" y="218" width="6" height="1" fill="#fff"/><rect x="708" y="220" width="6" height="1" fill="#fff"/><rect x="708" y="223" width="6" height="1" fill="#fff"/><rect x="708" y="225" width="6" height="1" fill="#fff"/><rect x="708" y="227" width="6" height="1" fill="#fff"/><rect x="708" y="230" width="6" height="1" fill="#fff"/><rect x="708" y="232" width="6" height="1" fill="#fff"/><rect x="708" y="235" width="6" height="1" fill="#fff"/><rect x="708" y="237" width="9" height="1" fill="#fff"/><rect x="708" y="240" width="6" height="1" fill="#fff"/><rect x="708" y="242" width="6" height="1" fill="#fff"/><rect x="708" y="245" width="6" height="1" fill="#fff"/><rect x="708" y="247" width="6" height="1" fill="#fff"/><rect x="708" y="250" width="6" height="1" fill="#fff"/><rect x="708" y="252" width="6" height="1" fill="#fff"/><rect x="708" y="255" width="6" height="1" fill="#fff"/><rect x="708" y="257" width="6" height="1" fill="#fff"/><rect x="708" y="259" width="6" height="1" fill="#fff"/><rect x="708" y="262" width="9" height="1" fill="#fff"/><rect x="708" y="264" width="6" height="1" fill="#fff"/><rect x="708" y="267" width="6" height="1" fill="#fff"/><rect x="708" y="269" width="6" height="1" fill="#fff"/><rect x="708" y="272" width="6" height="1" fill="#fff"/><rect x="708" y="274" width="6" height="1" fill="#fff"/><rect x="708" y="277" width="6" height="1" fill="#fff"/><rect x="708" y="279" width="6" height="1" fill="#fff"/><rect x="708" y="282" width="6" height="1" fill="#fff"/><rect x="708" y="284" width="6" height="1" fill="#fff"/><rect x="708" y="287" width="9" height="1" fill="#fff"/><rect x="133" y="296" width="9" height="1" fill="#fff"/><rect x="709" y="296" width="9" height="1" fill="#fff"/><rect x="136" y="298" width="6" height="1" fill="#fff"/><rect x="709" y="298" width="6" height="1" fill="#fff"/><rect x="136" y="300" width="6" height="1" fill="#fff"/><rect x="709" y="300" width="6" height="1" fill="#fff"/><rect x="136" y="303" width="6" height="1" fill="#fff"/><rect x="709" y="303" width="6" height="1" fill="#fff"/><rect x="136" y="305" width="6" height="1" fill="#fff"/><rect x="709" y="305" width="6" height="1" fill="#fff"/><rect x="136" y="308" width="6" height="1" fill="#fff"/><rect x="709" y="308" width="6" height="1" fill="#fff"/><rect x="136" y="310" width="6" height="1" fill="#fff"/><rect x="709" y="310" width="6" height="1" fill="#fff"/><rect x="136" y="313" width="6" height="1" fill="#fff"/><rect x="709" y="313" width="6" height="1" fill="#fff"/><rect x="136" y="315" width="6" height="1" fill="#fff"/><rect x="709" y="315" width="6" height="1" fill="#fff"/><rect x="136" y="317" width="6" height="1" fill="#fff"/><rect x="709" y="317" width="6" height="1" fill="#fff"/><rect x="133" y="320" width="9" height="1" fill="#fff"/><rect x="709" y="320" width="9" height="1" fill="#fff"/><rect x="136" y="322" width="6" height="1" fill="#fff"/><rect x="709" y="322" width="6" height="1" fill="#fff"/><rect x="136" y="325" width="6" height="1" fill="#fff"/><rect x="709" y="325" width="6" height="1" fill="#fff"/><rect x="136" y="327" width="6" height="1" fill="#fff"/><rect x="709" y="327" width="6" height="1" fill="#fff"/><rect x="136" y="330" width="6" height="1" fill="#fff"/><rect x="709" y="330" width="6" height="1" fill="#fff"/><rect x="136" y="332" width="6" height="1" fill="#fff"/><rect x="709" y="332" width="6" height="1" fill="#fff"/><rect x="136" y="335" width="6" height="1" fill="#fff"/><rect x="709" y="335" width="6" height="1" fill="#fff"/><rect x="136" y="337" width="6" height="1" fill="#fff"/><rect x="709" y="337" width="6" height="1" fill="#fff"/><rect x="136" y="339" width="6" height="1" fill="#fff"/><rect x="709" y="339" width="6" height="1" fill="#fff"/><rect x="136" y="342" width="6" height="1" fill="#fff"/><rect x="709" y="342" width="6" height="1" fill="#fff"/><rect x="133" y="344" width="9" height="1" fill="#fff"/><rect x="709" y="344" width="9" height="1" fill="#fff"/><rect x="136" y="347" width="6" height="1" fill="#fff"/><rect x="709" y="347" width="6" height="1" fill="#fff"/><rect x="136" y="349" width="6" height="1" fill="#fff"/><rect x="709" y="349" width="6" height="1" fill="#fff"/><rect x="136" y="352" width="6" height="1" fill="#fff"/><rect x="709" y="352" width="6" height="1" fill="#fff"/><rect x="136" y="354" width="6" height="1" fill="#fff"/><rect x="709" y="354" width="6" height="1" fill="#fff"/><rect x="136" y="357" width="6" height="1" fill="#fff"/><rect x="709" y="357" width="6" height="1" fill="#fff"/><rect x="136" y="359" width="6" height="1" fill="#fff"/><rect x="709" y="359" width="6" height="1" fill="#fff"/><rect x="136" y="361" width="6" height="1" fill="#fff"/><rect x="709" y="361" width="6" height="1" fill="#fff"/><rect x="136" y="364" width="6" height="1" fill="#fff"/><rect x="709" y="364" width="6" height="1" fill="#fff"/><rect x="136" y="366" width="6" height="1" fill="#fff"/><rect x="709" y="366" width="6" height="1" fill="#fff"/><rect x="133" y="369" width="9" height="1" fill="#fff"/><rect x="709" y="369" width="9" height="1" fill="#fff"/><rect x="136" y="371" width="6" height="1" fill="#fff"/><rect x="709" y="371" width="6" height="1" fill="#fff"/><rect x="136" y="374" width="6" height="1" fill="#fff"/><rect x="709" y="374" width="6" height="1" fill="#fff"/><rect x="136" y="376" width="6" height="1" fill="#fff"/><rect x="709" y="376" width="6" height="1" fill="#fff"/><rect x="136" y="378" width="6" height="1" fill="#fff"/><rect x="709" y="378" width="6" height="1" fill="#fff"/><rect x="136" y="381" width="6" height="1" fill="#fff"/><rect x="709" y="381" width="6" height="1" fill="#fff"/><rect x="136" y="383" width="6" height="1" fill="#fff"/><rect x="709" y="383" width="6" height="1" fill="#fff"/><rect x="136" y="386" width="6" height="1" fill="#fff"/><rect x="709" y="386" width="6" height="1" fill="#fff"/><rect x="136" y="388" width="6" height="1" fill="#fff"/><rect x="709" y="388" width="6" height="1" fill="#fff"/><rect x="136" y="391" width="6" height="1" fill="#fff"/><rect x="709" y="391" width="6" height="1" fill="#fff"/><rect x="133" y="393" width="9" height="1" fill="#fff"/><rect x="709" y="393" width="9" height="1" fill="#fff"/><rect x="136" y="396" width="6" height="1" fill="#fff"/><rect x="709" y="396" width="6" height="1" fill="#fff"/><rect x="136" y="398" width="6" height="1" fill="#fff"/><rect x="709" y="398" width="6" height="1" fill="#fff"/><rect x="136" y="400" width="6" height="1" fill="#fff"/><rect x="709" y="400" width="6" height="1" fill="#fff"/><rect x="136" y="403" width="6" height="1" fill="#fff"/><rect x="709" y="403" width="6" height="1" fill="#fff"/><rect x="136" y="405" width="6" height="1" fill="#fff"/><rect x="709" y="405" width="6" height="1" fill="#fff"/><rect x="136" y="408" width="6" height="1" fill="#fff"/><rect x="709" y="408" width="6" height="1" fill="#fff"/><rect x="136" y="410" width="6" height="1" fill="#fff"/><rect x="709" y="410" width="6" height="1" fill="#fff"/><rect x="136" y="413" width="6" height="1" fill="#fff"/><rect x="709" y="413" width="6" height="1" fill="#fff"/><rect x="136" y="415" width="6" height="1" fill="#fff"/><rect x="709" y="415" width="6" height="1" fill="#fff"/><rect x="133" y="418" width="9" height="1" fill="#fff"/><rect x="709" y="418" width="9" height="1" fill="#fff"/><rect x="133" y="429" width="9" height="1" fill="#fff"/><rect x="709" y="429" width="9" height="1" fill="#fff"/><rect x="136" y="431" width="6" height="1" fill="#fff"/><rect x="709" y="431" width="6" height="1" fill="#fff"/><rect x="136" y="433" width="6" height="1" fill="#fff"/><rect x="709" y="433" width="6" height="1" fill="#fff"/><rect x="136" y="436" width="6" height="1" fill="#fff"/><rect x="709" y="436" width="6" height="1" fill="#fff"/><rect x="136" y="438" width="6" height="1" fill="#fff"/><rect x="709" y="438" width="6" height="1" fill="#fff"/><rect x="136" y="441" width="6" height="1" fill="#fff"/><rect x="709" y="441" width="6" height="1" fill="#fff"/><rect x="136" y="443" width="6" height="1" fill="#fff"/><rect x="709" y="443" width="6" height="1" fill="#fff"/><rect x="136" y="446" width="6" height="1" fill="#fff"/><rect x="709" y="446" width="6" height="1" fill="#fff"/><rect x="136" y="448" width="6" height="1" fill="#fff"/><rect x="709" y="448" width="6" height="1" fill="#fff"/><rect x="136" y="450" width="6" height="1" fill="#fff"/><rect x="709" y="450" width="6" height="1" fill="#fff"/><rect x="133" y="453" width="9" height="1" fill="#fff"/><rect x="709" y="453" width="9" height="1" fill="#fff"/><rect x="136" y="455" width="6" height="1" fill="#fff"/><rect x="709" y="455" width="6" height="1" fill="#fff"/><rect x="136" y="458" width="6" height="1" fill="#fff"/><rect x="709" y="458" width="6" height="1" fill="#fff"/><rect x="136" y="460" width="6" height="1" fill="#fff"/><rect x="709" y="460" width="6" height="1" fill="#fff"/><rect x="136" y="463" width="6" height="1" fill="#fff"/><rect x="709" y="463" width="6" height="1" fill="#fff"/><rect x="136" y="465" width="6" height="1" fill="#fff"/><rect x="709" y="465" width="6" height="1" fill="#fff"/><rect x="136" y="468" width="6" height="1" fill="#fff"/><rect x="709" y="468" width="6" height="1" fill="#fff"/><rect x="136" y="470" width="6" height="1" fill="#fff"/><rect x="709" y="470" width="6" height="1" fill="#fff"/><rect x="136" y="472" width="6" height="1" fill="#fff"/><rect x="709" y="472" width="6" height="1" fill="#fff"/><rect x="136" y="475" width="6" height="1" fill="#fff"/><rect x="709" y="475" width="6" height="1" fill="#fff"/><rect x="133" y="477" width="9" height="1" fill="#fff"/><rect x="709" y="477" width="9" height="1" fill="#fff"/><rect x="136" y="480" width="6" height="1" fill="#fff"/><rect x="709" y="480" width="6" height="1" fill="#fff"/><rect x="136" y="482" width="6" height="1" fill="#fff"/><rect x="709" y="482" width="6" height="1" fill="#fff"/><rect x="136" y="485" width="6" height="1" fill="#fff"/><rect x="709" y="485" width="6" height="1" fill="#fff"/><rect x="136" y="487" width="6" height="1" fill="#fff"/><rect x="709" y="487" width="6" height="1" fill="#fff"/><rect x="136" y="490" width="6" height="1" fill="#fff"/><rect x="709" y="490" width="6" height="1" fill="#fff"/><rect x="136" y="492" width="6" height="1" fill="#fff"/><rect x="709" y="492" width="6" height="1" fill="#fff"/><rect x="136" y="494" width="6" height="1" fill="#fff"/><rect x="709" y="494" width="6" height="1" fill="#fff"/><rect x="136" y="497" width="6" height="1" fill="#fff"/><rect x="709" y="497" width="6" height="1" fill="#fff"/><rect x="136" y="499" width="6" height="1" fill="#fff"/><rect x="709" y="499" width="6" height="1" fill="#fff"/><rect x="133" y="502" width="9" height="1" fill="#fff"/><rect x="709" y="502" width="9" height="1" fill="#fff"/><rect x="136" y="504" width="6" height="1" fill="#fff"/><rect x="709" y="504" width="6" height="1" fill="#fff"/><rect x="136" y="507" width="6" height="1" fill="#fff"/><rect x="709" y="507" width="6" height="1" fill="#fff"/><rect x="136" y="509" width="6" height="1" fill="#fff"/><rect x="709" y="509" width="6" height="1" fill="#fff"/><rect x="136" y="511" width="6" height="1" fill="#fff"/><rect x="709" y="511" width="6" height="1" fill="#fff"/><rect x="136" y="514" width="6" height="1" fill="#fff"/><rect x="709" y="514" width="6" height="1" fill="#fff"/><rect x="136" y="516" width="6" height="1" fill="#fff"/><rect x="709" y="516" width="6" height="1" fill="#fff"/><rect x="136" y="519" width="6" height="1" fill="#fff"/><rect x="709" y="519" width="6" height="1" fill="#fff"/><rect x="136" y="521" width="6" height="1" fill="#fff"/><rect x="709" y="521" width="6" height="1" fill="#fff"/><rect x="136" y="524" width="6" height="1" fill="#fff"/><rect x="709" y="524" width="6" height="1" fill="#fff"/><rect x="133" y="526" width="9" height="1" fill="#fff"/><rect x="709" y="526" width="9" height="1" fill="#fff"/><rect x="136" y="529" width="6" height="1" fill="#fff"/><rect x="709" y="529" width="6" height="1" fill="#fff"/><rect x="136" y="531" width="6" height="1" fill="#fff"/><rect x="709" y="531" width="6" height="1" fill="#fff"/><rect x="136" y="533" width="6" height="1" fill="#fff"/><rect x="709" y="533" width="6" height="1" fill="#fff"/><rect x="136" y="536" width="6" height="1" fill="#fff"/><rect x="709" y="536" width="6" height="1" fill="#fff"/><rect x="136" y="538" width="6" height="1" fill="#fff"/><rect x="709" y="538" width="6" height="1" fill="#fff"/><rect x="136" y="541" width="6" height="1" fill="#fff"/><rect x="709" y="541" width="6" height="1" fill="#fff"/><rect x="136" y="543" width="6" height="1" fill="#fff"/><rect x="709" y="543" width="6" height="1" fill="#fff"/><rect x="136" y="546" width="6" height="1" fill="#fff"/><rect x="709" y="546" width="6" height="1" fill="#fff"/><rect x="136" y="548" width="6" height="1" fill="#fff"/><rect x="709" y="548" width="6" height="1" fill="#fff"/><rect x="133" y="551" width="9" height="1" fill="#fff"/><rect x="709" y="551" width="9" height="1" fill="#fff"/><rect x="133" y="561" width="9" height="1" fill="#fff"/><rect x="709" y="561" width="9" height="1" fill="#fff"/><rect x="136" y="563" width="6" height="1" fill="#fff"/><rect x="709" y="563" width="6" height="1" fill="#fff"/><rect x="136" y="565" width="6" height="1" fill="#fff"/><rect x="709" y="565" width="6" height="1" fill="#fff"/><rect x="136" y="568" width="6" height="1" fill="#fff"/><rect x="709" y="568" width="6" height="1" fill="#fff"/><rect x="136" y="570" width="6" height="1" fill="#fff"/><rect x="709" y="570" width="6" height="1" fill="#fff"/><rect x="136" y="573" width="6" height="1" fill="#fff"/><rect x="709" y="573" width="6" height="1" fill="#fff"/><rect x="136" y="575" width="6" height="1" fill="#fff"/><rect x="709" y="575" width="6" height="1" fill="#fff"/><rect x="136" y="578" width="6" height="1" fill="#fff"/><rect x="709" y="578" width="6" height="1" fill="#fff"/><rect x="136" y="580" width="6" height="1" fill="#fff"/><rect x="709" y="580" width="6" height="1" fill="#fff"/><rect x="136" y="583" width="6" height="1" fill="#fff"/><rect x="709" y="583" width="6" height="1" fill="#fff"/><rect x="133" y="585" width="9" height="1" fill="#fff"/><rect x="709" y="585" width="9" height="1" fill="#fff"/><rect x="136" y="588" width="6" height="1" fill="#fff"/><rect x="709" y="588" width="6" height="1" fill="#fff"/><rect x="136" y="590" width="6" height="1" fill="#fff"/><rect x="709" y="590" width="6" height="1" fill="#fff"/><rect x="136" y="592" width="6" height="1" fill="#fff"/><rect x="709" y="592" width="6" height="1" fill="#fff"/><rect x="136" y="595" width="6" height="1" fill="#fff"/><rect x="709" y="595" width="6" height="1" fill="#fff"/><rect x="136" y="597" width="6" height="1" fill="#fff"/><rect x="709" y="597" width="6" height="1" fill="#fff"/><rect x="136" y="600" width="6" height="1" fill="#fff"/><rect x="709" y="600" width="6" height="1" fill="#fff"/><rect x="136" y="602" width="6" height="1" fill="#fff"/><rect x="709" y="602" width="6" height="1" fill="#fff"/><rect x="136" y="605" width="6" height="1" fill="#fff"/><rect x="709" y="605" width="6" height="1" fill="#fff"/><rect x="136" y="607" width="6" height="1" fill="#fff"/><rect x="709" y="607" width="6" height="1" fill="#fff"/><rect x="133" y="610" width="9" height="1" fill="#fff"/><rect x="709" y="610" width="9" height="1" fill="#fff"/><rect x="136" y="612" width="6" height="1" fill="#fff"/><rect x="709" y="612" width="6" height="1" fill="#fff"/><rect x="136" y="615" width="6" height="1" fill="#fff"/><rect x="709" y="615" width="6" height="1" fill="#fff"/><rect x="136" y="617" width="6" height="1" fill="#fff"/><rect x="709" y="617" width="6" height="1" fill="#fff"/><rect x="136" y="620" width="6" height="1" fill="#fff"/><rect x="709" y="620" width="6" height="1" fill="#fff"/><rect x="136" y="622" width="6" height="1" fill="#fff"/><rect x="709" y="622" width="6" height="1" fill="#fff"/><rect x="136" y="624" width="6" height="1" fill="#fff"/><rect x="709" y="624" width="6" height="1" fill="#fff"/><rect x="136" y="627" width="6" height="1" fill="#fff"/><rect x="709" y="627" width="6" height="1" fill="#fff"/><rect x="136" y="629" width="6" height="1" fill="#fff"/><rect x="709" y="629" width="6" height="1" fill="#fff"/><rect x="136" y="632" width="6" height="1" fill="#fff"/><rect x="709" y="632" width="6" height="1" fill="#fff"/><rect x="133" y="634" width="9" height="1" fill="#fff"/><rect x="709" y="634" width="9" height="1" fill="#fff"/><rect x="136" y="637" width="6" height="1" fill="#fff"/><rect x="709" y="637" width="6" height="1" fill="#fff"/><rect x="136" y="639" width="6" height="1" fill="#fff"/><rect x="709" y="639" width="6" height="1" fill="#fff"/><rect x="136" y="642" width="6" height="1" fill="#fff"/><rect x="709" y="642" width="6" height="1" fill="#fff"/><rect x="136" y="644" width="6" height="1" fill="#fff"/><rect x="709" y="644" width="6" height="1" fill="#fff"/><rect x="136" y="647" width="6" height="1" fill="#fff"/><rect x="709" y="647" width="6" height="1" fill="#fff"/><rect x="136" y="649" width="6" height="1" fill="#fff"/><rect x="709" y="649" width="6" height="1" fill="#fff"/><rect x="136" y="652" width="6" height="1" fill="#fff"/><rect x="709" y="652" width="6" height="1" fill="#fff"/><rect x="136" y="654" width="6" height="1" fill="#fff"/><rect x="709" y="654" width="6" height="1" fill="#fff"/><rect x="136" y="656" width="6" height="1" fill="#fff"/><rect x="709" y="656" width="6" height="1" fill="#fff"/><rect x="133" y="659" width="9" height="1" fill="#fff"/><rect x="709" y="659" width="9" height="1" fill="#fff"/><rect x="136" y="661" width="6" height="1" fill="#fff"/><rect x="709" y="661" width="6" height="1" fill="#fff"/><rect x="136" y="664" width="6" height="1" fill="#fff"/><rect x="709" y="664" width="6" height="1" fill="#fff"/><rect x="136" y="666" width="6" height="1" fill="#fff"/><rect x="709" y="666" width="6" height="1" fill="#fff"/><rect x="136" y="669" width="6" height="1" fill="#fff"/><rect x="709" y="669" width="6" height="1" fill="#fff"/><rect x="136" y="671" width="6" height="1" fill="#fff"/><rect x="709" y="671" width="6" height="1" fill="#fff"/><rect x="136" y="674" width="6" height="1" fill="#fff"/><rect x="709" y="674" width="6" height="1" fill="#fff"/><rect x="136" y="676" width="6" height="1" fill="#fff"/><rect x="709" y="676" width="6" height="1" fill="#fff"/><rect x="136" y="679" width="6" height="1" fill="#fff"/><rect x="709" y="679" width="6" height="1" fill="#fff"/><rect x="136" y="681" width="6" height="1" fill="#fff"/><rect x="709" y="681" width="6" height="1" fill="#fff"/><rect x="133" y="684" width="9" height="1" fill="#fff"/><rect x="709" y="684" width="9" height="1" fill="#fff"/><rect x="142" y="275" width="565" height="1" fill="#fff"/><rect x="143" y="544" width="565" height="1" fill="#fff"/><rect x="143" y="387" width="565" height="1" fill="#ff0000"/><rect x="143" y="508" width="565" height="1" fill="#ff0000"/><rect x="143" y="634" width="565" height="1" fill="#00ff00"/><g shape-rendering="auto"><text x="128" y="23.5" text-anchor="end" font-size="13.4" fill="#fff" stroke="#fff" textLength="48" lengthAdjust="spacingAndGlyphs">3.1e+01</text><text x="128" y="48.1" text-anchor="end" font-size="13.4" fill="#fff" stroke="#fff" textLength="51" lengthAdjust="spacingAndGlyphs">2.5e+01</text><text x="128" y="72.7" text-anchor="end" font-size="13.4" fill="#fff" stroke="#fff" textLength="49" lengthAdjust="spacingAndGlyphs">1.9e+01</text><text x="128" y="97.3" text-anchor="end" font-size="13.4" fill="#fff" stroke="#fff" textLength="49" lengthAdjust="spacingAndGlyphs">1.2e+01</text><text x="128" y="121.9" text-anchor="end" font-size="13.4" fill="#fff" stroke="#fff" textLength="55" lengthAdjust="spacingAndGlyphs">6.2e+00</text><text x="721" y="23.5" text-anchor="start" font-size="13.4" fill="#fff" stroke="#fff" textLength="44" lengthAdjust="spacingAndGlyphs">76.265</text><text x="721" y="48.1" text-anchor="start" font-size="13.4" fill="#fff" stroke="#fff" textLength="44" lengthAdjust="spacingAndGlyphs">76.260</text><text x="721" y="72.7" text-anchor="start" font-size="13.4" fill="#fff" stroke="#fff" textLength="44" lengthAdjust="spacingAndGlyphs">76.255</text><text x="721" y="97.3" text-anchor="start" font-size="13.4" fill="#fff" stroke="#fff" textLength="44" lengthAdjust="spacingAndGlyphs">76.250</text><text x="721" y="121.9" text-anchor="start" font-size="13.4" fill="#fff" stroke="#fff" textLength="44" lengthAdjust="spacingAndGlyphs">76.245</text><text x="721" y="168.5" text-anchor="start" font-size="13.4" fill="#fff" stroke="#fff" textLength="22" lengthAdjust="spacingAndGlyphs">190</text><text x="721" y="193.1" text-anchor="start" font-size="13.4" fill="#fff" stroke="#fff" textLength="22" lengthAdjust="spacingAndGlyphs">150</text><text x="721" y="217.7" text-anchor="start" font-size="13.4" fill="#fff" stroke="#fff" textLength="19" lengthAdjust="spacingAndGlyphs">110</text><text x="721" y="242.3" text-anchor="start" font-size="13.4" fill="#fff" stroke="#fff" textLength="16" lengthAdjust="spacingAndGlyphs">70</text><text x="721" y="266.9" text-anchor="start" font-size="13.4" fill="#fff" stroke="#fff" textLength="16" lengthAdjust="spacingAndGlyphs">30</text><text x="129.5" y="300.5" text-anchor="end" font-size="13.4" fill="#fff" stroke="#fff" textLength="18" lengthAdjust="spacingAndGlyphs">1.5</text><text x="129.5" y="324.9" text-anchor="end" font-size="13.4" fill="#fff" stroke="#fff" textLength="15" lengthAdjust="spacingAndGlyphs">1.1</text><text x="129.5" y="349.3" text-anchor="end" font-size="13.4" fill="#fff" stroke="#fff" textLength="21" lengthAdjust="spacingAndGlyphs">0.7</text><text x="129.5" y="373.7" text-anchor="end" font-size="13.4" fill="#fff" stroke="#fff" textLength="21" lengthAdjust="spacingAndGlyphs">0.3</text><text x="129.5" y="398.1" text-anchor="end" font-size="13.4" fill="#fff" stroke="#fff" textLength="26" lengthAdjust="spacingAndGlyphs">-0.1</text><text x="721" y="300.5" text-anchor="start" font-size="13.4" fill="#fff" stroke="#fff" textLength="17" lengthAdjust="spacingAndGlyphs">1.5</text><text x="721" y="324.9" text-anchor="start" font-size="13.4" fill="#fff" stroke="#fff" textLength="14" lengthAdjust="spacingAndGlyphs">1.1</text><text x="721" y="349.3" text-anchor="start" font-size="13.4" fill="#fff" stroke="#fff" textLength="21" lengthAdjust="spacingAndGlyphs">0.7</text><text x="721" y="373.7" text-anchor="start" font-size="13.4" fill="#fff" stroke="#fff" textLength="21" lengthAdjust="spacingAndGlyphs">0.3</text><text x="721" y="398.1" text-anchor="start" font-size="13.4" fill="#fff" stroke="#fff" textLength="26" lengthAdjust="spacingAndGlyphs">-0.1</text><text x="129" y="433.5" text-anchor="end" font-size="13.4" fill="#fff" stroke="#fff" textLength="40" lengthAdjust="spacingAndGlyphs">23500</text><text x="129" y="457.9" text-anchor="end" font-size="13.4" fill="#fff" stroke="#fff" textLength="37" lengthAdjust="spacingAndGlyphs">18800</text><text x="129" y="482.3" text-anchor="end" font-size="13.4" fill="#fff" stroke="#fff" textLength="34" lengthAdjust="spacingAndGlyphs">14100</text><text x="129" y="506.7" text-anchor="end" font-size="13.4" fill="#fff" stroke="#fff" textLength="31" lengthAdjust="spacingAndGlyphs">9400</text><text x="129" y="531.1" text-anchor="end" font-size="13.4" fill="#fff" stroke="#fff" textLength="31" lengthAdjust="spacingAndGlyphs">4700</text><text x="721" y="433.5" text-anchor="start" font-size="13.4" fill="#fff" stroke="#fff" textLength="24" lengthAdjust="spacingAndGlyphs">260</text><text x="721" y="457.9" text-anchor="start" font-size="13.4" fill="#fff" stroke="#fff" textLength="24" lengthAdjust="spacingAndGlyphs">206</text><text x="721" y="482.3" text-anchor="start" font-size="13.4" fill="#fff" stroke="#fff" textLength="21" lengthAdjust="spacingAndGlyphs">152</text><text x="721" y="506.7" text-anchor="start" font-size="13.4" fill="#fff" stroke="#fff" textLength="16" lengthAdjust="spacingAndGlyphs">98</text><text x="721" y="531.1" text-anchor="start" font-size="13.4" fill="#fff" stroke="#fff" textLength="16" lengthAdjust="spacingAndGlyphs">44</text><text x="129" y="565.5" text-anchor="end" font-size="13.4" fill="#fff" stroke="#fff" textLength="25" lengthAdjust="spacingAndGlyphs">0.15</text><text x="721" y="565.5" text-anchor="start" font-size="13.4" fill="#fff" stroke="#fff" textLength="25" lengthAdjust="spacingAndGlyphs">0.15</text><text x="129" y="590.1" text-anchor="end" font-size="13.4" fill="#fff" stroke="#fff" textLength="25" lengthAdjust="spacingAndGlyphs">0.10</text><text x="721" y="590.1" text-anchor="start" font-size="13.4" fill="#fff" stroke="#fff" textLength="25" lengthAdjust="spacingAndGlyphs">0.10</text><text x="129" y="614.7" text-anchor="end" font-size="13.4" fill="#fff" stroke="#fff" textLength="28" lengthAdjust="spacingAndGlyphs">0.05</text><text x="721" y="614.7" text-anchor="start" font-size="13.4" fill="#fff" stroke="#fff" textLength="28" lengthAdjust="spacingAndGlyphs">0.05</text><text x="129" y="639.3" text-anchor="end" font-size="13.4" fill="#fff" stroke="#fff" textLength="28" lengthAdjust="spacingAndGlyphs">0.00</text><text x="721" y="639.3" text-anchor="start" font-size="13.4" fill="#fff" stroke="#fff" textLength="28" lengthAdjust="spacingAndGlyphs">0.00</text><text x="129" y="663.9" text-anchor="end" font-size="13.4" fill="#fff" stroke="#fff" textLength="36" lengthAdjust="spacingAndGlyphs">-0.05</text><text x="721" y="663.9" text-anchor="start" font-size="13.4" fill="#fff" stroke="#fff" textLength="36" lengthAdjust="spacingAndGlyphs">-0.05</text><text x="129" y="688.5" text-anchor="end" font-size="13.4" fill="#fff" stroke="#fff" textLength="33" lengthAdjust="spacingAndGlyphs">-0.10</text><text x="721" y="688.5" text-anchor="start" font-size="13.4" fill="#fff" stroke="#fff" textLength="33" lengthAdjust="spacingAndGlyphs">-0.10</text><text x="111" y="184" text-anchor="start" font-size="12.6" fill="#fff" stroke="#fff" textLength="13" lengthAdjust="spacingAndGlyphs">10</text><text x="124" y="178" text-anchor="start" font-size="8.5" fill="#fff" stroke="#fff" textLength="5" lengthAdjust="spacingAndGlyphs">2</text><text x="111" y="237.5" text-anchor="start" font-size="12.6" fill="#fff" stroke="#fff" textLength="13" lengthAdjust="spacingAndGlyphs">10</text><text x="124" y="231.5" text-anchor="start" font-size="8.5" fill="#fff" stroke="#fff" textLength="4" lengthAdjust="spacingAndGlyphs">1</text><text x="141.9" y="701.5" text-anchor="middle" font-size="16" fill="#fff" stroke="#fff" textLength="43.2" lengthAdjust="spacingAndGlyphs">08:00</text><text x="236.9" y="701.5" text-anchor="middle" font-size="16" fill="#fff" stroke="#fff" textLength="43.19999999999999" lengthAdjust="spacingAndGlyphs">08:40</text><text x="331.35" y="701.5" text-anchor="middle" font-size="16" fill="#fff" stroke="#fff" textLength="44.099999999999966" lengthAdjust="spacingAndGlyphs">09:20</text><text x="426.15" y="701.5" text-anchor="middle" font-size="16" fill="#fff" stroke="#fff" textLength="40.5" lengthAdjust="spacingAndGlyphs">10:00</text><text x="520.5999999999999" y="701.5" text-anchor="middle" font-size="16" fill="#fff" stroke="#fff" textLength="40.39999999999998" lengthAdjust="spacingAndGlyphs">10:40</text><text x="615.3499999999999" y="701.5" text-anchor="middle" font-size="16" fill="#fff" stroke="#fff" textLength="36.10000000000002" lengthAdjust="spacingAndGlyphs">11:20</text><text x="709.35" y="701.5" text-anchor="middle" font-size="16" fill="#fff" stroke="#fff" textLength="40.299999999999955" lengthAdjust="spacingAndGlyphs">12:00</text><text x="33" y="701.5" text-anchor="start" font-size="16" fill="#fff" stroke="#fff" textLength="74" lengthAdjust="spacingAndGlyphs">2013/200</text><text x="142.5" y="14" text-anchor="start" font-size="15.3" fill="#fff" stroke="#fff" textLength="122" lengthAdjust="spacingAndGlyphs">NPI Vector Data</text><text x="142.5" y="159" text-anchor="start" font-size="15.3" fill="#fff" stroke="#fff" textLength="116" lengthAdjust="spacingAndGlyphs">MEx ELS-01 LR</text><text transform="translate(40.5,80) rotate(-90)" text-anchor="middle" font-size="17" fill="#fff" stroke="#fff" textLength="51" lengthAdjust="spacingAndGlyphs">Sector</text><text transform="translate(55,80.5) rotate(-90)" text-anchor="middle" font-size="17" fill="#fff" stroke="#fff" textLength="65" lengthAdjust="spacingAndGlyphs">Unitless</text><text transform="translate(71.5,225.5) rotate(-90)" text-anchor="middle" font-size="14" fill="#fff" stroke="#fff" textLength="104" lengthAdjust="spacingAndGlyphs">Electron Energy</text><text transform="translate(83,225.5) rotate(-90)" text-anchor="middle" font-size="11" fill="#fff" stroke="#fff" textLength="15" lengthAdjust="spacingAndGlyphs">eV</text><text transform="translate(48.5,357.5) rotate(-90)" text-anchor="middle" font-size="12.5" fill="#fff" stroke="#fff" textLength="81" lengthAdjust="spacingAndGlyphs">Sensor Data</text><text transform="translate(61,357.5) rotate(-90)" text-anchor="middle" font-size="12.5" fill="#fff" stroke="#fff" textLength="121" lengthAdjust="spacingAndGlyphs">MU Scanner +30V</text><text transform="translate(73.8,357.5) rotate(-90)" text-anchor="middle" font-size="12.5" fill="#fff" stroke="#fff" textLength="62" lengthAdjust="spacingAndGlyphs">Raw Data</text><text transform="translate(86,357) rotate(-90)" text-anchor="middle" font-size="12.5" fill="#fff" stroke="#fff" textLength="25" lengthAdjust="spacingAndGlyphs">Raw</text><text transform="translate(42.5,490.5) rotate(-90)" text-anchor="middle" font-size="11" fill="#fff" stroke="#fff" textLength="70" lengthAdjust="spacingAndGlyphs">Sensor Data</text><text transform="translate(53.5,490.5) rotate(-90)" text-anchor="middle" font-size="11" fill="#fff" stroke="#fff" textLength="110" lengthAdjust="spacingAndGlyphs">Model Scanner Pos</text><text transform="translate(64.5,490) rotate(-90)" text-anchor="middle" font-size="11" fill="#fff" stroke="#fff" textLength="23" lengthAdjust="spacingAndGlyphs">Raw</text><text transform="translate(75,490.5) rotate(-90)" text-anchor="middle" font-size="11" fill="#fff" stroke="#fff" textLength="44" lengthAdjust="spacingAndGlyphs">unitless</text><text transform="translate(36,623) rotate(-90)" text-anchor="middle" font-size="14" fill="#fff" stroke="#fff" textLength="86" lengthAdjust="spacingAndGlyphs">Sensor Data</text><text transform="translate(50.3,622.5) rotate(-90)" text-anchor="middle" font-size="14" fill="#fff" stroke="#fff" textLength="107" lengthAdjust="spacingAndGlyphs">Model Constant</text><text transform="translate(64,622) rotate(-90)" text-anchor="middle" font-size="14" fill="#fff" stroke="#fff" textLength="52" lengthAdjust="spacingAndGlyphs">velocity</text><text transform="translate(78,622.5) rotate(-90)" text-anchor="middle" font-size="14" fill="#fff" stroke="#fff" textLength="72" lengthAdjust="spacingAndGlyphs">index/sec</text><text transform="translate(812.5,80.5) rotate(90)" text-anchor="middle" font-size="11.5" fill="#fff" stroke="#fff" textLength="72" lengthAdjust="spacingAndGlyphs">Sensor Data</text><text transform="translate(801.2,80.5) rotate(90)" text-anchor="middle" font-size="11.5" fill="#fff" stroke="#fff" textLength="107" lengthAdjust="spacingAndGlyphs">ESH Sun Elevation</text><text transform="translate(791,80) rotate(90)" text-anchor="middle" font-size="11.5" fill="#fff" stroke="#fff" textLength="33" lengthAdjust="spacingAndGlyphs">Angle</text><text transform="translate(779.5,81) rotate(90)" text-anchor="middle" font-size="11.5" fill="#fff" stroke="#fff" textLength="39" lengthAdjust="spacingAndGlyphs">degree</text><text transform="translate(802.5,225.5) rotate(90)" text-anchor="middle" font-size="15" fill="#fff" stroke="#fff" textLength="92" lengthAdjust="spacingAndGlyphs">Sensor Data</text><text transform="translate(787,226.5) rotate(90)" text-anchor="middle" font-size="15" fill="#fff" stroke="#fff" textLength="113" lengthAdjust="spacingAndGlyphs">Model Scanner</text><text transform="translate(773.5,224.5) rotate(90)" text-anchor="middle" font-size="15" fill="#fff" stroke="#fff" textLength="42" lengthAdjust="spacingAndGlyphs">Angle</text><text transform="translate(759,225) rotate(90)" text-anchor="middle" font-size="15" fill="#fff" stroke="#fff" textLength="58" lengthAdjust="spacingAndGlyphs">degrees</text><text transform="translate(802.5,357) rotate(90)" text-anchor="middle" font-size="12.8" fill="#ff0000" stroke="#ff0000" textLength="79" lengthAdjust="spacingAndGlyphs">Sensor Data</text><text transform="translate(790,357) rotate(90)" text-anchor="middle" font-size="12.8" fill="#ff0000" stroke="#ff0000" textLength="104" lengthAdjust="spacingAndGlyphs">MU Scanner Init</text><text transform="translate(776.8,357) rotate(90)" text-anchor="middle" font-size="12.8" fill="#ff0000" stroke="#ff0000" textLength="61" lengthAdjust="spacingAndGlyphs">Raw Data</text><text transform="translate(765,357) rotate(90)" text-anchor="middle" font-size="12.8" fill="#ff0000" stroke="#ff0000" textLength="26" lengthAdjust="spacingAndGlyphs">Raw</text><text transform="translate(802,490) rotate(90)" text-anchor="middle" font-size="13.5" fill="#ff0000" stroke="#ff0000" textLength="85" lengthAdjust="spacingAndGlyphs">Sensor Data</text><text transform="translate(788.5,490) rotate(90)" text-anchor="middle" font-size="13.5" fill="#ff0000" stroke="#ff0000" textLength="115" lengthAdjust="spacingAndGlyphs">MU Scanner Pos</text><text transform="translate(772.5,490.5) rotate(90)" text-anchor="middle" font-size="13.5" fill="#ff0000" stroke="#ff0000" textLength="66" lengthAdjust="spacingAndGlyphs">Telemetry</text><text transform="translate(762,490) rotate(90)" text-anchor="middle" font-size="13.5" fill="#ff0000" stroke="#ff0000" textLength="54" lengthAdjust="spacingAndGlyphs">Unitless</text><text transform="translate(815,621.5) rotate(90)" text-anchor="middle" font-size="14.5" fill="#00ff00" stroke="#00ff00" textLength="85" lengthAdjust="spacingAndGlyphs">Sensor Data</text><text transform="translate(801.8,622.5) rotate(90)" text-anchor="middle" font-size="14.5" fill="#00ff00" stroke="#00ff00" textLength="108" lengthAdjust="spacingAndGlyphs">Model Constant</text><text transform="translate(788.5,622.5) rotate(90)" text-anchor="middle" font-size="13.5" fill="#00ff00" stroke="#00ff00" textLength="84" lengthAdjust="spacingAndGlyphs">acceleration</text><text transform="translate(774.5,622.5) rotate(90)" text-anchor="middle" font-size="13.5" fill="#00ff00" stroke="#00ff00" textLength="92" lengthAdjust="spacingAndGlyphs">index/sec**2</text><text x="889" y="135" font-size="8.5" fill="#fff" textLength="7" lengthAdjust="spacingAndGlyphs">10</text><text x="896.5" y="131" font-size="6" fill="#fff" textLength="3" lengthAdjust="spacingAndGlyphs">6</text><text x="889" y="117" font-size="8.5" fill="#fff" textLength="7" lengthAdjust="spacingAndGlyphs">10</text><text x="896.5" y="113" font-size="6" fill="#fff" textLength="3" lengthAdjust="spacingAndGlyphs">7</text><text x="889" y="100" font-size="8.5" fill="#fff" textLength="7" lengthAdjust="spacingAndGlyphs">10</text><text x="896.5" y="96" font-size="6" fill="#fff" textLength="3" lengthAdjust="spacingAndGlyphs">8</text><text x="889" y="82" font-size="8.5" fill="#fff" textLength="7" lengthAdjust="spacingAndGlyphs">10</text><text x="896.5" y="78" font-size="6" fill="#fff" textLength="3" lengthAdjust="spacingAndGlyphs">9</text><text x="889" y="64" font-size="8.5" fill="#fff" textLength="7" lengthAdjust="spacingAndGlyphs">10</text><text x="896.5" y="60" font-size="6" fill="#fff" textLength="6" lengthAdjust="spacingAndGlyphs">10</text><text x="889" y="47" font-size="8.5" fill="#fff" textLength="7" lengthAdjust="spacingAndGlyphs">10</text><text x="896.5" y="43" font-size="6" fill="#fff" textLength="6" lengthAdjust="spacingAndGlyphs">11</text><text x="889" y="29" font-size="8.5" fill="#fff" textLength="7" lengthAdjust="spacingAndGlyphs">10</text><text x="896.5" y="25" font-size="6" fill="#fff" textLength="6" lengthAdjust="spacingAndGlyphs">12</text><text x="873.5" y="22.5" text-anchor="middle" font-size="9" font-weight="bold" fill="#fff">NF</text><text transform="translate(921,79.5) rotate(90)" text-anchor="middle" font-size="11.5" fill="#fff" stroke-width="0.45" stroke="#fff" textLength="108" lengthAdjust="spacingAndGlyphs">cnts/(cm**2-sr-sec)</text><text x="889" y="280" font-size="8.5" fill="#fff" textLength="7" lengthAdjust="spacingAndGlyphs">10</text><text x="896.5" y="276" font-size="6" fill="#fff" textLength="6" lengthAdjust="spacingAndGlyphs">-6</text><text x="889" y="227" font-size="8.5" fill="#fff" textLength="7" lengthAdjust="spacingAndGlyphs">10</text><text x="896.5" y="223" font-size="6" fill="#fff" textLength="6" lengthAdjust="spacingAndGlyphs">-5</text><text x="889" y="174" font-size="8.5" fill="#fff" textLength="7" lengthAdjust="spacingAndGlyphs">10</text><text x="896.5" y="170" font-size="6" fill="#fff" textLength="6" lengthAdjust="spacingAndGlyphs">-4</text><text x="873.5" y="167.5" text-anchor="middle" font-size="9" font-weight="bold" fill="#fff">DEF</text><text transform="translate(923,224.5) rotate(90)" text-anchor="middle" font-size="10.5" fill="#fff" stroke-width="0.3" stroke="#fff" textLength="127" lengthAdjust="spacingAndGlyphs">ergs/(cm**2-sr-sec-eV)</text></g></svg>
<script>window.P1ROWS=[
 [0,0,[[142,.19,0],[280,.16,0],[301,.1,0],[440,.08,.05],[461,.08,.85],[480,.08,.9],[500,-1,1]]],
 [1,1,[[142,.19,0],[280,.16,.02],[301,.1,0],[350,.08,.05],[360,.08,.97],[450,.08,.97],[470,-1,1]]],
 [2,2,[[142,.19,0],[280,.16,.05],[301,.1,.1],[350,.08,.2],[365,.08,.98],[450,-1,1]]],
 [3,3,[[142,.28,0],[200,.2,0],[300,.17,0],[320,.12,0],[460,.06,.05],[528,.05,.1],[534,.05,.7],[590,.05,.8],[600,-1,1]]],
 [4,4,[[142,.28,0],[200,.2,0],[300,.17,0],[320,.12,0],[460,.06,.15],[495,.05,.4],[505,.05,.82],[560,.05,.9],[580,-1,1]]],
 [5,5,[[142,.28,0],[200,.2,0],[300,.17,0],[320,.12,.05],[440,.06,.15],[490,.05,.5],[500,.05,.92],[550,.05,.95],[560,-1,1]]],
 [6,6,[[142,.26,0],[200,.21,0],[300,.16,0],[320,.11,.05],[400,.08,.2],[460,.06,.7],[490,.05,.95],[500,-1,1]]],
 [7,7,[[142,.135,0],[200,.11,.0],[250,.09,.03],[300,.07,.15],[340,.06,.2],[350,.06,.9],[460,.06,.95],[470,-1,1]]],
 [8,8,[[142,.135,0],[200,.11,.01],[250,.09,.2],[300,.07,.7],[310,.07,.92],[340,.07,.98],[350,-1,1]]],
 [9,10,[[142,.135,0],[190,.11,.02],[250,.09,.5],[300,.07,.9],[340,.07,.98],[350,-1,1]]],
 [11,11,[[142,.28,0],[200,.27,0],[300,.22,0],[400,.16,0],[460,.15,0],[580,.1,.03],[600,.06,.2],[640,.04,.25],[706,.04,.2]]],
 [12,12,[[142,.27,0],[200,.26,0],[300,.2,0],[400,.16,0],[460,.14,0],[550,.1,.05],[560,.08,.4],[621,.05,.5],[640,.04,.6],[706,.04,.5]]],
 [13,13,[[142,.25,0],[200,.25,0],[300,.19,0],[400,.15,0],[460,.12,.02],[540,.1,.1],[558,.1,.3],[562,-1,1],[706,-1,1]]],
 [14,15,[[142,-1,1],[706,-1,1]]],
 [16,17,[[142,.05,.93],[150,.05,.8],[175,.05,.8],[185,.05,.97],[225,.05,.97],[236,.05,.8],[250,.05,.85],[260,.05,.97],[300,.05,.98],[320,-1,1],[706,-1,1]]],
 [18,18,[[142,.04,.03],[225,.04,.05],[232,.05,.35],[300,.05,.45],[310,.05,.85],[400,.05,.93],[410,-1,1],[706,-1,1]]],
 [19,20,[[142,.26,0],[200,.25,0],[400,.2,0],[600,.165,0],[706,.16,0]]],
 [21,21,[[142,.29,0],[400,.26,0],[600,.2,0],[706,.2,0]]],
 [22,22,[[142,.375,0],[400,.34,0],[600,.3,0],[706,.29,0]]],
 [23,23,[[142,.33,0],[400,.33,0],[600,.33,0],[706,.34,0]]],
 [24,24,[[142,.25,0],[400,.25,0],[600,.27,0],[706,.32,0]]],
 [25,25,[[142,.25,0],[400,.25,0],[600,.28,0],[706,.34,0]]],
 [26,26,[[142,.3,0],[400,.28,0],[600,.35,0],[706,.38,0]]],
 [27,27,[[142,.375,0],[400,.38,0],[600,.46,0],[706,.44,0]]],
 [28,28,[[142,.33,0],[400,.335,0],[600,.42,0],[706,.39,0]]],
 [29,29,[[142,.35,0],[400,.36,0],[600,.39,0],[706,.39,0]]]
];
(function(){
var cv=document.getElementById('c'),ctx=cv.getContext('2d');
var W=1024,H=708,img=ctx.createImageData(W,H),d=img.data;
for(var i=3;i<d.length;i+=4)d[i]=255;
var s=12345;function rnd(){s|=0;s=s+0x6D2B79F5|0;var t=Math.imul(s^s>>>15,1|s);t=t+Math.imul(t^t>>>7,61|t)^t;return((t^t>>>14)>>>0)/4294967296;}
function gauss(){return Math.sqrt(-2*Math.log(rnd()+1e-9))*Math.cos(6.2832*rnd());}
var CS=[[0,128,0,255],[0.2,0,0,255],[0.4,0,255,255],[0.6,0,255,0],[0.8,255,255,0],[0.9,255,128,0],[1,255,0,0]];
function cmap(t){if(t<0)t=0;if(t>1)t=1;for(var i=1;i<CS.length;i++){if(t<=CS[i][0]){var a=CS[i-1],b=CS[i],f=(t-a[0])/(b[0]-a[0]);return[a[1]+(b[1]-a[1])*f,a[2]+(b[2]-a[2])*f,a[3]+(b[3]-a[3])*f];}}return[255,0,0];}
function px(x,y,c){var o=(y*W+x)*4;d[o]=c[0];d[o+1]=c[1];d[o+2]=c[2];}
function interp(an,x){ // an: [[x,t,p],...]
  if(x<=an[0][0])return an[0];
  for(var i=1;i<an.length;i++){if(x<=an[i][0]){var a=an[i-1],b=an[i],f=(x-a[0])/(b[0]-a[0]);return[x,a[1]+(b[1]-a[1])*f,a[2]+(b[2]-a[2])*f];}}
  return an[an.length-1];
}
P1ROWS=window.P1ROWS;
// P1: rows from y=21, 4px each, 30 rows; cols 142..706
var colN=[];for(var x=0;x<W;x++)colN.push(0);
for(var x=142;x<=706;x++){colN[x]=gauss()*0.005;}
for(var r=0;r<P1ROWS.length;r++){
  var row=P1ROWS[r];
  for(var k=row[0];k<=row[1];k++){
    var y0=21+4*k;var lastblk=false;
    for(var x=142;x<=706;x++){
      var a=interp(row[2],x);
      var t=a[1]+colN[x]+gauss()*0.005;
      var pp=a[2];var blk=pp>0&&(pp>=1||rnd()<(lastblk?(1+pp)/2:pp/2));
      lastblk=blk;
      for(var yy=y0;yy<(k==29?142:y0+4)&&yy<142;yy++){
        for(var xx=x;xx<x+1;xx++){
          if(blk||a[1]<0)px(xx,yy,[0,0,0]);else px(xx,yy,cmap(t));
        }
      }
    }
  }
}
// P1 rows 14-17 speckles done in table
// P1 line
for(var x=142;x<=706;x++){var u=x-141;var y=Math.round(34+0.1498*u+1.783e-5*u*u);px(x,y,[255,255,255]);}
// P2
function lerpT(tab,y){if(y<=tab[0][0])return tab[0].slice(1);for(var i=1;i<tab.length;i++){if(y<=tab[i][0]){var a=tab[i-1],b=tab[i],f=(y-a[0])/(b[0]-a[0]);return[a[1]+(b[1]-a[1])*f,a[2]+(b[2]-a[2])*f];}}return tab[tab.length-1].slice(1);}
var MAIN=[[168,.17,.08],[204,.2,.06],[212,.3,.05],[222,.37,.04],[232,.33,.05],[238,.23,.15],[244,.16,.55],[250,.13,.88],[273,.12,.92],[274,.12,.92],[287,.12,.95]];
var BURST=[[168,.4,.02],[172,.5,0],[180,.58,0],[185,.72,0],[190,.84,0],[197,.82,0],[203,.72,0],[210,.62,0],[220,.5,0],[232,.36,.03],[246,.24,.15],[256,.2,.35],[273,.18,.45],[274,.18,.6],[287,.18,.75]];
var prevRow=[];
for(var y=168;y<287;y+=2){
  for(var x=142;x<291;x+=(y>=240?2:1)){var cw=(y>=240?2:1);
    var m=lerpT(MAIN,y);
    var mt=m[0],mp=m[1];
    if(x>200&&y<205)mp+=0.02;
    var edge=160+8*Math.max(0,1-Math.abs(y-215)/20);
    var bw=x<=edge?1:Math.max(0,1-(x-edge)/5);
    var b=lerpT(BURST,y);
    var bt=b[0],bp=b[1];
    bt+=0.1*Math.exp(-Math.pow((x-155)/5,2)-Math.pow((y-190)/6,2));
    if(x<146)bt-=0.04;
    var t=mt*(1-bw)+bt*bw, p=mp*(1-bw)+bp*bw;
    var blk=rnd()<p;
    var tt=t+gauss()*(bw>0.5?0.05:(y>=244?0.045:0.075));
    var c=blk?[0,0,0]:cmap(tt);
    for(var xx=x;xx<x+cw&&xx<291;xx++){
    if(y==274){ px(xx,y+1,c); continue; }
    for(var yy=y;yy<y+2&&yy<287;yy++)px(xx,yy,c);}
  }
}
ctx.putImageData(img,0,0);
})();
</script>
</body></html>
